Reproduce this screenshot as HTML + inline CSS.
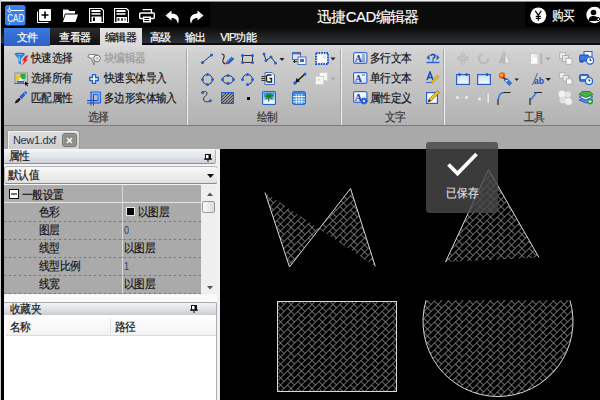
<!DOCTYPE html>
<html><head><meta charset="utf-8">
<style>
*{margin:0;padding:0;box-sizing:border-box}
html,body{width:600px;height:400px;overflow:hidden;background:#000;font-family:"Liberation Sans",sans-serif;font-size:12px}
.a{position:absolute}
#top{left:0;top:0;width:600px;height:27px;background:#000}
#tabs{left:0;top:27px;width:600px;height:18px;background:linear-gradient(#0a0a0a,#303437 16.5px,#0c0c0c 16.5px)}
.tab{position:absolute;top:28px;height:18px;color:#fff;font-size:11px;line-height:18px;text-align:center;letter-spacing:-0.6px;-webkit-text-stroke:0.2px currentColor}
#ribbon{left:0;top:45px;width:600px;height:81px;background:linear-gradient(#dadada,#d0d0d0 10%,#c2c2c2 55%,#b2b2b2)}
#rb2{left:0;top:125px;width:600px;height:1px;background:#7c7c7c}
#doctabs{left:0;top:126px;width:600px;height:23px;background:#a9a9a9}
#leftb{left:0;top:0;width:1px;height:400px;background:#cfcfcf}
#leftk{left:1px;top:45px;width:3px;height:355px;background:#000}
#panel{left:4px;top:148px;width:216px;height:252px;background:#f2f2f2}
.t{position:absolute;white-space:nowrap;color:#111;font-size:11px;line-height:14px;letter-spacing:-0.6px;transform:scaleY(1.12);transform-origin:0 55%;-webkit-text-stroke:0.15px currentColor}
.sep{position:absolute;top:49px;width:2px;height:76px;border-left:1px solid #a8a8a8;border-right:1px solid #efefef}
</style></head><body>
<div class="a" id="top"></div>
<div class="a" id="tabs"></div>
<div class="a" id="ribbon"></div>
<div class="a" id="rb2"></div>
<div class="a" id="doctabs"></div>

<!-- top bar -->
<div class="a" style="left:210px;top:1px;width:315px;height:26px;background:#0b0b0b"></div>
<div class="a" style="left:0;top:0;width:600px;height:2px;background:linear-gradient(#f0f0f0 1px,#8a8a8a 1px)"></div>
<svg class="a" style="left:5px;top:5px" width="21" height="21" viewBox="0 0 21 21">
 <rect x="0" y="0" width="20.5" height="20.5" rx="2.5" fill="#3d7fe8"/>
 <line x1="2.5" y1="5.5" x2="19" y2="5.5" stroke="#fff" stroke-width="1"/>
 <circle cx="4.5" cy="5.5" r="1.5" fill="#3d7fe8" stroke="#fff" stroke-width="0.9"/>
 <line x1="4.5" y1="1.5" x2="4.5" y2="4" stroke="#fff" stroke-width="0.8"/>
 <line x1="4.5" y1="18" x2="4.5" y2="19.5" stroke="#fff" stroke-width="0.8"/>
 <text x="10.8" y="17.3" fill="#fff" font-family="Liberation Sans" font-size="10" text-anchor="middle" textLength="17" lengthAdjust="spacingAndGlyphs">CAD</text>
</svg>
<svg class="a" style="left:36px;top:8px" width="16" height="16" viewBox="0 0 16 16">
 <path d="M1.5 3.5 V14.5 H12.5" fill="none" stroke="#fff" stroke-width="1"/>
 <rect x="3" y="1" width="12" height="12" rx="1" fill="#fff"/>
 <path d="M9 3.5 V10.5 M5.5 7 H12.5" stroke="#000" stroke-width="1.6"/>
</svg>
<svg class="a" style="left:62px;top:8px" width="17" height="15" viewBox="0 0 17 15">
 <path d="M1 1.5 H6 L7.5 3 H13 V5.5 H3 L1 11 Z" fill="#fff"/>
 <path d="M3.5 6.5 H16 L13.5 14 H1 Z" fill="#fff"/>
</svg>
<svg class="a" style="left:89px;top:8px" width="15" height="15" viewBox="0 0 15 15">
 <path d="M0.5 0.5 H12.5 L14.5 2.5 V14.5 H0.5 Z" fill="none" stroke="#fff" stroke-width="1.2"/>
 <rect x="2.5" y="2" width="9" height="2" fill="#fff"/><rect x="2.5" y="5.2" width="9" height="1.5" fill="#fff"/>
 <path d="M2.5 8.5 H12.5 V14 H2.5 Z" fill="#fff"/><rect x="4" y="9.5" width="2" height="3.5" fill="#000"/>
</svg>
<svg class="a" style="left:114px;top:8px" width="15" height="15" viewBox="0 0 15 15">
 <path d="M0.5 0.5 H12.5 L14.5 2.5 V14.5 H0.5 Z" fill="none" stroke="#fff" stroke-width="1.2"/>
 <rect x="2.5" y="2" width="9" height="2" fill="#fff"/><rect x="2.5" y="5.2" width="9" height="1.5" fill="#fff"/>
 <path d="M2.5 9 H13 V14 H2.5 Z" fill="#fff"/>
 <path d="M3.5 10.2 H5.5 V12.8 H3.5 Z M7 10.2 H9 V12.8 H7 Z M10.5 10.2 H11.5 V12.8 H10.5 Z" fill="#333"/>
</svg>
<svg class="a" style="left:139px;top:9px" width="16" height="14" viewBox="0 0 16 14">
 <path d="M3.5 0.5 H12.5 V4" fill="none" stroke="#fff" stroke-width="1.3"/>
 <rect x="0.7" y="4" width="14.6" height="5.5" rx="1" fill="none" stroke="#fff" stroke-width="1.4"/>
 <rect x="4" y="7.5" width="8" height="6" fill="#fff"/>
 <rect x="5.3" y="9" width="5" height="1" fill="#000"/><rect x="5.3" y="11" width="5" height="1" fill="#000"/>
</svg>
<svg class="a" style="left:165px;top:10px" width="16" height="15" viewBox="0 0 16 15">
 <path d="M0.5 5.5 L6.5 0.5 V3.5 C12 3.5 15.5 7 13 14 C12 9.5 10 8 6.5 8 V10.5 Z" fill="#fff"/>
</svg>
<svg class="a" style="left:188px;top:10px" width="16" height="15" viewBox="0 0 16 15">
 <path d="M15.5 5.5 L9.5 0.5 V3.5 C4 3.5 0.5 7 3 14 C4 9.5 6 8 9.5 8 V10.5 Z" fill="#fff"/>
</svg>
<div class="t" style="left:317px;top:9px;color:#fff;font-size:15px;line-height:16px;letter-spacing:-0.6px;transform:none">迅捷CAD编辑器</div>
<svg class="a" style="left:530px;top:7px" width="17" height="17" viewBox="0 0 17 17">
 <circle cx="8.3" cy="8.5" r="8" fill="#fff"/>
 <path d="M5.3 3.8 L8.3 8.2 L11.3 3.8 M8.3 8.2 V13.8 M5.8 9.3 H10.8 M5.8 11.3 H10.8" fill="none" stroke="#000" stroke-width="1.2"/>
</svg>
<div class="t" style="left:552px;top:9px;color:#fff;font-size:12px">购买</div>
<svg class="a" style="left:586px;top:6px" width="17" height="18" viewBox="0 0 17 18">
 <circle cx="8.5" cy="9" r="8.2" fill="#fff"/>
 <circle cx="7.5" cy="6.5" r="2.8" fill="#000"/>
 <path d="M2.5 15 C3 10.5 5 10 7.5 10 C10 10 11.5 11 12 13 L10 15 Z" fill="#000"/>
 <circle cx="12" cy="13" r="1.6" fill="none" stroke="#000" stroke-width="1"/>
</svg>
<!-- tabs -->
<div class="a" style="left:4px;top:28px;width:46px;height:18px;background:linear-gradient(#3a78e0,#2c62c8)"></div>
<div class="tab" style="left:4px;width:46px">文件</div>
<div class="a" style="left:50px;top:28px;width:50px;height:17px;background:linear-gradient(#2a2a2a,#111)"></div>
<div class="tab" style="left:50px;width:50px">查看器</div>
<div class="a" style="left:100px;top:28px;width:42px;height:18px;background:linear-gradient(#e2e2e2,#dadada)"></div>
<div class="tab" style="left:100px;width:41px;color:#111">编辑器</div>
<div class="tab" style="left:142px;width:36px">高级</div>
<div class="tab" style="left:178px;width:34px">输出</div>
<div class="tab" style="left:210px;width:56px;letter-spacing:-0.8px">VIP功能</div>

<!-- ribbon group 1 -->
<svg class="a" style="left:14px;top:52px" width="15" height="14" viewBox="0 0 15 14">
 <path d="M0.5 2 C0.5 0.2 11 0.2 11 2 L7 7 V12.5 L4.5 11.5 V7 Z" fill="#2a86e0"/>
 <ellipse cx="5.8" cy="2" rx="4.6" ry="1.1" fill="#1a5ab8"/>
 <ellipse cx="5.8" cy="2.2" rx="3.5" ry="0.5" fill="#8cc8ff"/>
 <path d="M5 4 L6 9" stroke="#bfe0ff" stroke-width="0.8"/>
 <path d="M12 3.5 L8 8.5 H10.5 L7.5 13.8 L14 7.5 H11.8 L14.5 3.5 Z" fill="#e81c24"/>
</svg>
<div class="t" style="left:31px;top:51px">快速选择</div>
<svg class="a" style="left:14px;top:72px" width="16" height="15" viewBox="0 0 16 15">
 <rect x="0.5" y="0.5" width="1.2" height="1" fill="#666"/><rect x="0.5" y="11" width="1.2" height="1" fill="#222"/><rect x="2.5" y="0.5" width="1.2" height="1" fill="#666"/><rect x="2.5" y="11" width="1.2" height="1" fill="#222"/><rect x="4.5" y="0.5" width="1.2" height="1" fill="#666"/><rect x="4.5" y="11" width="1.2" height="1" fill="#222"/><rect x="6.5" y="0.5" width="1.2" height="1" fill="#666"/><rect x="6.5" y="11" width="1.2" height="1" fill="#222"/><rect x="8.5" y="0.5" width="1.2" height="1" fill="#666"/><rect x="8.5" y="11" width="1.2" height="1" fill="#222"/><rect x="10.5" y="0.5" width="1.2" height="1" fill="#666"/><rect x="10.5" y="11" width="1.2" height="1" fill="#222"/><rect x="12.5" y="0.5" width="1.2" height="1" fill="#666"/><rect x="12.5" y="11" width="1.2" height="1" fill="#222"/><rect x="0.5" y="2.5" width="1" height="1.2" fill="#666"/><rect x="13" y="2.5" width="1" height="1.2" fill="#666"/><rect x="0.5" y="4.5" width="1" height="1.2" fill="#666"/><rect x="13" y="4.5" width="1" height="1.2" fill="#666"/><rect x="0.5" y="6.5" width="1" height="1.2" fill="#666"/><rect x="13" y="6.5" width="1" height="1.2" fill="#666"/><rect x="0.5" y="8.5" width="1" height="1.2" fill="#666"/><rect x="13" y="8.5" width="1" height="1.2" fill="#666"/><rect x="0.5" y="10.5" width="1" height="1.2" fill="#666"/><rect x="13" y="10.5" width="1" height="1.2" fill="#666"/>
 <circle cx="4.5" cy="6" r="2.8" fill="#f2c414"/>
 <path d="M6.5 2 H11.5 V6.5 C10 7.5 7.5 7 6.5 5.5 Z" fill="#28a838"/>
 <path d="M3.5 10 L6.5 5 L9.5 10 Z" fill="#e8f0ff"/>
 <rect x="3" y="9" width="7" height="1.6" fill="#1a5ad0"/>
 <path d="M11 9.5 L15 12 L13 12.3 L14 14.3 L13.2 14.6 L12.2 12.6 L11 14 Z" fill="#000"/>
</svg>
<div class="t" style="left:31px;top:71px">选择所有</div>
<svg class="a" style="left:14px;top:91px" width="14" height="13" viewBox="0 0 14 13">
 <path d="M0.5 12.5 L2 9.5 L5.5 6.5 L7 8 L4 11.5 Z" fill="#1a1a1a"/>
 <path d="M5 6 L10.5 0.8 C11.5 0 13.5 1 12.8 2.3 L7.5 8.5 Z" fill="#2a5ec8"/>
 <path d="M10 2 L12 3.5" stroke="#9ac4ff" stroke-width="1"/>
 <path d="M5 6 L7.5 8.5" stroke="#d8d8d8" stroke-width="0.8"/>
</svg>
<div class="t" style="left:31px;top:91px">匹配属性</div>
<svg class="a" style="left:87px;top:52px" width="14" height="14" viewBox="0 0 14 14">
 <path d="M2 2.5 H9.5 L7.5 6 L7 13 L4.5 6.5 L0.8 5 Z" fill="#d8d8d8" stroke="#7a7a7a" stroke-width="0.9"/>
 <rect x="2.5" y="3" width="4" height="2" fill="#fafafa"/>
 <circle cx="10" cy="6.5" r="3.3" fill="#f4f4f4" stroke="#707070" stroke-width="1"/>
 <circle cx="10" cy="6.5" r="1.4" fill="#bdbdbd"/>
</svg>
<div class="t" style="left:104px;top:51px;color:#9a9a9a">块编辑器</div>
<svg class="a" style="left:89px;top:74px" width="10" height="10" viewBox="0 0 10 10">
 <path d="M3.5 0.7 H6.5 V3.5 H9.3 V6.5 H6.5 V9.3 H3.5 V6.5 H0.7 V3.5 H3.5 Z" fill="#fff" stroke="#1f5fc8" stroke-width="1.3"/>
</svg>
<div class="t" style="left:104px;top:71px">快速实体导入</div>
<svg class="a" style="left:87px;top:91px" width="14" height="15" viewBox="0 0 14 15">
 <path d="M4 1 H13 V12 H4 Z M6.5 3.5 V9.5 H11 V3.5 Z" fill="#8ab4f8" fill-rule="evenodd"/>
 <path d="M3.5 1 H13.5 V12 M6.5 3.5 H11 V9.5" fill="none" stroke="#2060e0" stroke-width="1"/>
 <path d="M0 9.5 H11 M0 12 H13.5 M4 1 V14.5 M6.5 3.5 V14.5" fill="none" stroke="#1848c8" stroke-width="1"/>
</svg>
<div class="t" style="left:104px;top:91px">多边形实体输入</div>
<div class="t" style="left:88px;top:110px;color:#333">选择</div>
<div class="sep" style="left:186px"></div>
<!-- group 2 -->
<svg class="a" style="left:200px;top:53px" width="14" height="12" viewBox="0 0 14 12">
 <line x1="2.5" y1="9.5" x2="11.5" y2="2" stroke="#333" stroke-width="1"/>
 <circle cx="2.5" cy="9.5" r="1.6" fill="#1f5fd8"/><circle cx="11.5" cy="2" r="1.6" fill="#1f5fd8"/>
</svg>
<svg class="a" style="left:220px;top:53px" width="15" height="12" viewBox="0 0 15 12">
 <path d="M1.5 1 C4 1 5 3 3.5 5.5 C2 8 3 10.5 5.5 11" fill="none" stroke="#222" stroke-width="1.1"/>
 <path d="M6 9 L11.5 3.5 L14 6 L8.5 11 Z" fill="#2a82e8"/>
 <path d="M8.5 11 L14 6 L13 5 L7.5 10 Z" fill="#1a4ab8"/>
 <path d="M6 9 L8.5 11 L5.2 11.3 Z" fill="#e02020"/>
</svg>
<svg class="a" style="left:241px;top:54px" width="13" height="10" viewBox="0 0 13 10">
 <rect x="1.5" y="1.5" width="10" height="7" fill="none" stroke="#333" stroke-width="1"/>
 <circle cx="1.5" cy="1.5" r="1.5" fill="#1f5fd8"/><circle cx="11.5" cy="1.5" r="1.5" fill="#1f5fd8"/>
 <circle cx="1.5" cy="8.5" r="1.5" fill="#1f5fd8"/><circle cx="11.5" cy="8.5" r="1.5" fill="#1f5fd8"/>
</svg>
<svg class="a" style="left:262px;top:52px" width="24" height="13" viewBox="0 0 24 13">
 <path d="M2 2 L4 8.5 L9 5 L13.5 11" fill="none" stroke="#333" stroke-width="1"/>
 <circle cx="2" cy="2" r="1.5" fill="#1f5fd8"/><circle cx="4" cy="8.5" r="1.5" fill="#1f5fd8"/>
 <circle cx="9" cy="5" r="1.5" fill="#1f5fd8"/><circle cx="13.5" cy="11" r="1.5" fill="#1f5fd8"/>
 <path d="M17.5 6 H22.5 L20 9 Z" fill="#222"/>
</svg>
<svg class="a" style="left:292px;top:52px" width="15" height="13" viewBox="0 0 15 13">
 <rect x="0.5" y="0.5" width="8" height="7" fill="#dfe8f8" stroke="#4a74c0" stroke-width="1"/>
 <rect x="0.5" y="0.5" width="8" height="1.8" fill="#3a6ad0"/><rect x="6" y="0.5" width="2.5" height="1.8" fill="#e03030"/>
 <rect x="6" y="5" width="8" height="7.5" fill="#eef3fc" stroke="#4a74c0" stroke-width="1"/>
 <rect x="8" y="7" width="4" height="3" fill="#3a6ad0"/>
 <path d="M1.5 9.5 H5 M3 8 L1.5 9.5 L3 11" fill="none" stroke="#222" stroke-width="1"/>
</svg>
<svg class="a" style="left:315px;top:52px" width="22" height="13" viewBox="0 0 22 13">
 <rect x="1" y="1" width="12" height="11" fill="#eaf0fc" stroke="#1e50d0" stroke-width="2" stroke-dasharray="1.6 1"/>
 <path d="M3 3.5 H8 L11 6.5 V10 H3 Z" fill="#fff"/>
 <path d="M8 3.5 V6.5 H11" fill="#c8d8f4"/>
 <path d="M15.5 5.5 H20.5 L18 8.5 Z" fill="#222"/>
</svg>
<svg class="a" style="left:201px;top:73px" width="13" height="13" viewBox="0 0 13 13">
 <circle cx="6.5" cy="6.5" r="5" fill="none" stroke="#333" stroke-width="1"/>
 <circle cx="6.5" cy="1.5" r="1.5" fill="#1f5fd8"/><circle cx="1.5" cy="6.5" r="1.5" fill="#1f5fd8"/>
 <circle cx="11.5" cy="6.5" r="1.5" fill="#1f5fd8"/><circle cx="6.5" cy="11.5" r="1.5" fill="#1f5fd8"/>
</svg>
<svg class="a" style="left:221px;top:74px" width="14" height="11" viewBox="0 0 14 11">
 <ellipse cx="7" cy="5.5" rx="5.5" ry="4" fill="none" stroke="#333" stroke-width="1"/>
 <circle cx="7" cy="1.5" r="1.5" fill="#1f5fd8"/><circle cx="1.5" cy="5.5" r="1.5" fill="#1f5fd8"/>
 <circle cx="12.5" cy="5.5" r="1.5" fill="#1f5fd8"/><circle cx="7" cy="9.5" r="1.5" fill="#1f5fd8"/>
</svg>
<svg class="a" style="left:241px;top:73px" width="13" height="13" viewBox="0 0 13 13">
 <path d="M1.5 6.5 A5 5 0 1 1 6.5 11.5" fill="none" stroke="#333" stroke-width="1"/>
 <circle cx="6.5" cy="1.5" r="1.5" fill="#1f5fd8"/><circle cx="1.5" cy="6.5" r="1.5" fill="#1f5fd8"/>
 <circle cx="11.5" cy="6.5" r="1.5" fill="#1f5fd8"/><circle cx="6.5" cy="11.5" r="1.5" fill="#1f5fd8"/>
</svg>
<svg class="a" style="left:261px;top:72px" width="14" height="13" viewBox="0 0 14 13">
 <path d="M4 0.5 H11 L13.5 3 V12.5 H4 Z" fill="#eef2fa" stroke="#3a6ac8" stroke-width="1"/>
 <path d="M10.5 3 H7 C5.8 3 5.5 4 5.5 5 V8.5 C5.5 9.5 6 10 7 10 H10.5 V6.5 H8.5" fill="none" stroke="#222" stroke-width="1.3"/>
 <path d="M0.5 4.5 H4.5 M0 6.5 H4.5 M0.5 8.5 H4.5" stroke="#333" stroke-width="1"/>
</svg>
<svg class="a" style="left:293px;top:72px" width="14" height="13" viewBox="0 0 14 13">
 <line x1="2" y1="11" x2="12" y2="2" stroke="#1a1a1a" stroke-width="1.5"/>
 <path d="M2.5 10.5 L3.5 6 L7 9.5 Z" fill="#111"/>
 <circle cx="12" cy="2" r="1.5" fill="#1f5fd8"/><circle cx="2" cy="11" r="1.7" fill="#1f5fd8"/>
</svg>
<svg class="a" style="left:315px;top:72px" width="22" height="13" viewBox="0 0 22 13">
 <rect x="4.5" y="0.5" width="8" height="8" fill="#f6f6f6" stroke="#d0d0d0" stroke-width="1"/>
 <rect x="0.5" y="4.5" width="8" height="8" fill="#fafafa" stroke="#cfcfcf" stroke-width="1"/>
 <path d="M3 7 L7 10.5 M3 7 V9.5 M3 7 H5.5" stroke="#d4d4d4" stroke-width="0.9" fill="none"/>
 <path d="M15.5 5.5 H20.5 L18 8.5 Z" fill="#a8a8a8"/>
</svg>
<svg class="a" style="left:201px;top:91px" width="11" height="12" viewBox="0 0 11 12">
 <path d="M1.5 1.5 C3 0 6 0 6 2.5 C6 5 2.5 5 2.5 8 C2.5 11 6 11.5 9.5 10" fill="none" stroke="#333" stroke-width="1"/>
 <circle cx="1.6" cy="1.6" r="1.5" fill="#1f5fd8"/><circle cx="9.4" cy="9.8" r="1.5" fill="#1f5fd8"/>
</svg>
<svg class="a" style="left:221px;top:92px" width="13" height="12" viewBox="0 0 13 12">
 <rect x="0.6" y="0.6" width="11.8" height="10.8" fill="#9a9a9a" stroke="#1f5fd8" stroke-width="1.2"/>
 <path d="M1 8 L8 1 M1 11 L11 1 M4 11 L12 3 M7 11 L12 6 M10 11 L12 9 M1 5 L5 1" stroke="#333" stroke-width="0.9"/>
</svg>
<div class="a" style="left:247px;top:97px;width:3px;height:3px;background:#000"></div>
<svg class="a" style="left:262px;top:91px" width="14" height="14" viewBox="0 0 14 14">
 <defs><linearGradient id="sky" x1="0" y1="0" x2="0" y2="1"><stop offset="0" stop-color="#1a90e0"/><stop offset="1" stop-color="#a8e0ff"/></linearGradient></defs>
 <rect x="0.6" y="0.6" width="12.8" height="12.8" rx="1" fill="#fff" stroke="#2a5ec8" stroke-width="1.2"/>
 <rect x="1.5" y="1.5" width="11" height="8" fill="url(#sky)"/>
 <path d="M6.5 12 L7 5.5" stroke="#3a4a20" stroke-width="1.1"/>
 <path d="M7 5.5 L2.5 5 M7 5.5 L11.5 4.5 M7 5.5 L3.5 8 M7 5.5 L10.5 8 M7 5.5 L5 2.5 M7 5.5 L9 2.5" stroke="#107a30" stroke-width="1.5"/>
 <rect x="1.5" y="10.5" width="11" height="2" fill="#e8f4ff"/>
</svg>
<svg class="a" style="left:292px;top:91px" width="14" height="14" viewBox="0 0 14 14">
 <rect x="0.6" y="0.6" width="12.8" height="12.8" rx="1.5" fill="#3a8ae8" stroke="#2a62c8" stroke-width="1"/>
 <path d="M4.2 3 V13 M7 3 V13 M9.8 3 V13 M1 5.5 H13 M1 8.2 H13 M1 10.8 H13" stroke="#fff" stroke-width="0.9"/>
</svg>
<div class="t" style="left:257px;top:110px;color:#333">绘制</div>
<div class="sep" style="left:340px"></div>
<!-- group 3 -->
<svg class="a" style="left:353px;top:52px" width="15" height="12" viewBox="0 0 15 12">
 <defs><linearGradient id="ag" x1="0" y1="0" x2="0" y2="1"><stop offset="0" stop-color="#ffffff"/><stop offset="1" stop-color="#d0e0fa"/></linearGradient></defs>
 <rect x="0.6" y="0.6" width="13.3" height="10.8" rx="1.5" fill="url(#ag)" stroke="#3a6ad8" stroke-width="1.2"/>
 <text x="1.8" y="9.8" font-family="Liberation Serif" font-weight="bold" font-size="10" fill="#1a3ab0">A</text>
 <path d="M8.8 3 H12 M8.8 5 H12 M8.8 7 H12 M8.8 9 H12" stroke="#2a3a7a" stroke-width="0.8"/>
</svg>
<div class="t" style="left:370px;top:51px">多行文本</div>
<svg class="a" style="left:353px;top:72px" width="15" height="12" viewBox="0 0 15 12">
 <rect x="0.6" y="0.6" width="13.3" height="10.8" rx="1.5" fill="url(#ag)" stroke="#3a6ad8" stroke-width="1.2"/>
 <text x="1.8" y="9.8" font-family="Liberation Serif" font-weight="bold" font-size="10" fill="#1a3ab0">A</text>
 <path d="M8.8 3 H12" stroke="#2a3a7a" stroke-width="0.8"/>
</svg>
<div class="t" style="left:370px;top:71px">单行文本</div>
<svg class="a" style="left:353px;top:91px" width="15" height="14" viewBox="0 0 15 14">
 <rect x="0.6" y="0.6" width="13.3" height="10.8" rx="1.5" fill="url(#ag)" stroke="#3a6ad8" stroke-width="1.2"/>
 <text x="1.8" y="9.8" font-family="Liberation Serif" font-weight="bold" font-size="10" fill="#1a3ab0">A</text>
 <circle cx="11" cy="10" r="2.8" fill="#2a6ae0" stroke="#1a4ab8" stroke-width="1.4" stroke-dasharray="1 0.8"/>
 <circle cx="11" cy="10" r="1" fill="#fff"/>
</svg>
<div class="t" style="left:370px;top:91px">属性定义</div>
<svg class="a" style="left:426px;top:53px" width="14" height="11" viewBox="0 0 14 11">
 <path d="M0.5 4.5 L3.5 1.5 V7.5 Z M13.5 4.5 L10.5 1.5 V7.5 Z" fill="#1f5fd8"/>
 <path d="M0.5 9.5 H13.5" stroke="#1f5fd8" stroke-width="1.4"/>
 <path d="M4.8 2.8 C5 1 9 1 9 3 C9 4.5 7 4.5 7 6.5" fill="none" stroke="#1a3a98" stroke-width="1.4"/>
 <rect x="6.3" y="7.3" width="1.4" height="1.2" fill="#1a3a98"/>
</svg>
<svg class="a" style="left:426px;top:71px" width="14" height="13" viewBox="0 0 14 13">
 <path d="M1 9 L4 1 L7 9 M2 6.5 H6" fill="none" stroke="#1a4ab8" stroke-width="1.5"/>
 <path d="M0 11.5 H7" stroke="#3a6ad0" stroke-width="1"/>
 <path d="M5 11 L11.5 4 L13 5.5 L6.5 12.5 Z" fill="#f0c020" stroke="#a07010" stroke-width="0.5"/>
</svg>
<svg class="a" style="left:426px;top:90px" width="14" height="14" viewBox="0 0 14 14">
 <rect x="0.6" y="2.6" width="10.8" height="10.8" fill="#fff" stroke="#2a5ec8" stroke-width="1.2"/>
 <path d="M2 12 L3 9 L11.5 0.5 L13.5 2.5 L5 11 Z" fill="#f0c020" stroke="#806010" stroke-width="0.6"/>
 <path d="M2 12 L3 9 L5 11 Z" fill="#222"/>
</svg>
<div class="t" style="left:385px;top:110px;color:#333">文字</div>
<div class="sep" style="left:443px"></div>
<!-- group 4 -->
<svg class="a" style="left:456px;top:52px" width="14" height="13" viewBox="0 0 14 13">
 <path d="M7 0.5 L9 3 H7.8 V5.7 H10.5 V4.5 L13 6.5 L10.5 8.5 V7.3 H7.8 V10 H9 L7 12.5 L5 10 H6.2 V7.3 H3.5 V8.5 L1 6.5 L3.5 4.5 V5.7 H6.2 V3 H5 Z" fill="#d4d4d4" stroke="#a8a8a8" stroke-width="0.7"/>
</svg>
<svg class="a" style="left:477px;top:52px" width="13" height="13" viewBox="0 0 13 13">
 <path d="M5 2.5 A4.5 4.5 0 1 0 11 6" fill="none" stroke="#b8b8b8" stroke-width="2"/>
 <path d="M3 0 L7.5 2.5 L4 5.5 Z" fill="#c8c8c8"/>
</svg>
<svg class="a" style="left:497px;top:51px" width="14" height="14" viewBox="0 0 14 14">
 <path d="M7 0 V14" stroke="#a8a8a8" stroke-width="1"/>
 <path d="M6 2 V12 H1 Z" fill="#b8b8b8"/><path d="M8 2 V12 H13 Z" fill="#f0f0f0" stroke="#b0b0b0" stroke-width="0.7"/>
</svg>
<svg class="a" style="left:530px;top:53px" width="21" height="12" viewBox="0 0 21 12">
 <rect x="0.5" y="0.5" width="12" height="11" fill="url(#gg)" stroke="#c8c8c8" stroke-width="1"/>
 <defs><linearGradient id="gg"><stop offset="0" stop-color="#fafafa"/><stop offset="0.5" stop-color="#e8e8e8"/><stop offset="1" stop-color="#aaaaaa"/></linearGradient></defs>
 <rect x="3" y="5" width="4" height="5" fill="#fff"/>
 <path d="M15.5 4.5 H20.5 L18 7.5 Z" fill="#a0a0a0"/>
</svg>
<svg class="a" style="left:559px;top:52px" width="14" height="13" viewBox="0 0 14 13">
 <rect x="0.7" y="0.7" width="6" height="6" fill="#f4f4f4" stroke="#b0b0b0" stroke-width="1"/>
 <rect x="3.5" y="3.5" width="6" height="6" fill="#e8e8e8" stroke="#b0b0b0" stroke-width="1"/>
 <rect x="7" y="6.3" width="6" height="6" fill="#fafafa" stroke="#b0b0b0" stroke-width="1"/>
</svg>
<svg class="a" style="left:579px;top:51px" width="15" height="14" viewBox="0 0 15 14">
 <rect x="5" y="0.5" width="8" height="6" fill="#eef3ff" stroke="#2a5ec8" stroke-width="1"/>
 <rect x="0.7" y="4" width="9" height="6" rx="1" fill="#3a7ae0" stroke="#1a4ab8" stroke-width="1"/>
 <circle cx="11" cy="9.5" r="3.6" fill="#fff" stroke="#1f5fd8" stroke-width="1.2"/>
 <path d="M11 7.5 V9.5 H12.5" stroke="#1f5fd8" stroke-width="1"/>
 <rect x="0.5" y="10" width="4" height="1.5" fill="#1a4ab8"/>
</svg>
<svg class="a" style="left:456px;top:73px" width="14" height="12" viewBox="0 0 14 12">
 <rect x="0.6" y="1.6" width="12.8" height="9.8" fill="url(#bg1)" stroke="#2a5ec8" stroke-width="1.2"/>
 <defs><linearGradient id="bg1" x1="0" y1="0" x2="0" y2="1"><stop offset="0" stop-color="#c8dcff"/><stop offset="1" stop-color="#f8fbff"/></linearGradient></defs>
 <circle cx="3.5" cy="1.6" r="1.3" fill="#1a4ab8"/><circle cx="10.5" cy="1.6" r="1.3" fill="#1a4ab8"/>
</svg>
<svg class="a" style="left:477px;top:73px" width="14" height="12" viewBox="0 0 14 12">
 <rect x="0.6" y="1.6" width="12.8" height="9.8" fill="url(#bg1)" stroke="#2a5ec8" stroke-width="1.2"/>
 <circle cx="10" cy="1.6" r="1.3" fill="#1a4ab8"/>
</svg>
<svg class="a" style="left:498px;top:72px" width="21" height="14" viewBox="0 0 21 14">
 <circle cx="4" cy="3.5" r="3.2" fill="#f05a20"/><circle cx="3.5" cy="3" r="1.5" fill="#ffb030"/>
 <path d="M4.5 6 L6 5 L8 7 L7 8 Z" fill="#222"/>
 <path d="M6 8 L9 6.5 L13.5 11 L11.5 13.5 Z" fill="#2a7ae8" stroke="#1a4ab8" stroke-width="0.7"/>
 <rect x="7.5" y="8" width="2" height="1.5" fill="#fff"/>
 <path d="M16.5 6.5 H21 L18.7 9 Z" fill="#222"/>
</svg>
<svg class="a" style="left:531px;top:72px" width="21" height="14" viewBox="0 0 21 14">
 <path d="M1.5 13 L6.5 1" stroke="#666" stroke-width="1"/>
 <text x="3" y="12" font-family="Liberation Sans" font-weight="bold" font-size="9" fill="#1a4ad0" textLength="10" lengthAdjust="spacingAndGlyphs">ab</text>
 <path d="M14.5 6 H20 L17.2 9 Z" fill="#222"/>
</svg>
<svg class="a" style="left:559px;top:72px" width="14" height="13" viewBox="0 0 14 13">
 <rect x="0.7" y="0.7" width="5.5" height="5.5" fill="#f8f8f8" stroke="#b0b0b0" stroke-width="1"/>
 <rect x="4" y="3.5" width="5.5" height="5.5" fill="#eaeaea" stroke="#b0b0b0" stroke-width="1"/>
 <rect x="7.5" y="6.8" width="5.5" height="5.5" fill="#fafafa" stroke="#b0b0b0" stroke-width="1"/>
</svg>
<svg class="a" style="left:579px;top:74px" width="14" height="11" viewBox="0 0 14 11">
 <rect x="0.7" y="0.7" width="9" height="6.5" rx="1" fill="#3a7ae0" stroke="#1a4ab8" stroke-width="1"/>
 <rect x="2" y="2" width="6" height="3" fill="#dfe9ff"/>
 <circle cx="10" cy="7" r="3.5" fill="#fff" stroke="#1f5fd8" stroke-width="1.2"/>
 <path d="M10 5 V7 H11.5" stroke="#1f5fd8" stroke-width="1"/>
</svg>
<svg class="a" style="left:456px;top:95px" width="14" height="5" viewBox="0 0 14 5">
 <rect x="0" y="1" width="3" height="3" fill="#f4f4f4" stroke="#c0c0c0" stroke-width="0.6"/>
 <path d="M4 2.5 H8" stroke="#c8c8c8" stroke-width="1" />
 <rect x="9" y="1" width="3" height="3" fill="#f4f4f4" stroke="#c0c0c0" stroke-width="0.6"/>
</svg>
<svg class="a" style="left:477px;top:92px" width="14" height="12" viewBox="0 0 14 12">
 <path d="M0 7 H9" stroke="#c0c0c0" stroke-width="1"/>
 <rect x="1" y="5.5" width="3" height="3" fill="#f4f4f4" stroke="#c0c0c0" stroke-width="0.6"/>
 <rect x="10" y="0.5" width="2.5" height="11" fill="#e8e8e8" stroke="#b8b8b8" stroke-width="0.8"/>
</svg>
<svg class="a" style="left:497px;top:91px" width="14" height="14" viewBox="0 0 14 14">
 <path d="M1 14 V8 M6 1.5 H13.5" fill="none" stroke="#222" stroke-width="1.2"/>
 <path d="M1.5 9 C1.5 5 3 2 6.5 1.8" fill="none" stroke="#2a7ae8" stroke-width="1.4"/>
</svg>
<svg class="a" style="left:529px;top:91px" width="13" height="14" viewBox="0 0 13 14">
 <path d="M1 14 V7 M5 1.5 H13" fill="none" stroke="#222" stroke-width="1.2"/>
 <path d="M1.5 9 L7.5 1.5" stroke="#2a7ae8" stroke-width="1.4"/>
</svg>
<svg class="a" style="left:558px;top:90px" width="15" height="16" viewBox="0 0 15 16">
 <circle cx="4" cy="4" r="3.5" fill="#f2f2f2"/><circle cx="10" cy="4.5" r="3" fill="#e6e6e6"/>
 <circle cx="5" cy="10" r="3.5" fill="#e0e0e0"/><circle cx="10.5" cy="11.5" r="3.5" fill="#f0f0f0"/>
</svg>
<svg class="a" style="left:578px;top:91px" width="16" height="14" viewBox="0 0 16 14">
 <path d="M1 9 L8 12 L15 9 L8 6 Z" fill="#5a8ae0" stroke="#1a4ab8" stroke-width="0.8"/>
 <path d="M1 6 L8 9 L15 6 L8 3 Z" fill="#dfe8f8" stroke="#1a4ab8" stroke-width="0.8"/>
 <path d="M1 3.5 L8 6.5 L15 3.5 L12 0.5 H4 Z" fill="#48b048" stroke="#207020" stroke-width="0.8"/>
 <circle cx="12" cy="10.5" r="3" fill="#20a040"/>
 <path d="M10.5 10.5 H13.5 M12 9 V12" stroke="#fff" stroke-width="1"/>
</svg>
<div class="t" style="left:524px;top:110px;color:#333">工具</div>

<!-- doc tabs -->
<div class="a" style="left:7px;top:130px;width:73px;height:19px;background:linear-gradient(#dedede,#cfcfcf);border:1px solid #9a9a9a;border-bottom:none;border-radius:2px 3px 0 0;box-shadow:inset 1px 1px 0 #f0f0f0"></div>
<div class="a" style="left:13px;top:133px;color:#2a3548;font-size:11px;letter-spacing:-0.35px;line-height:14px;font-family:'Liberation Sans',sans-serif;white-space:nowrap">New1.dxf</div>
<div class="a" style="left:62px;top:133px;width:15px;height:14px;background:#8c8c8c;border:1px solid #747474;border-radius:3px;box-shadow:inset 0 0 0 1px #9c9c9c"></div>
<svg class="a" style="left:65px;top:136px" width="9" height="9" viewBox="0 0 9 9"><path d="M2 2 L7 7 M7 2 L2 7" stroke="#fffbe0" stroke-width="1.6"/></svg>
<!-- panel -->
<div class="a" style="left:4px;top:149px;width:216px;height:251px;background:#f4f4f4"></div>
<div class="a" style="left:4px;top:149px;width:212px;height:15px;background:linear-gradient(#f0f2f5,#e2e5e9 50%,#ced2d8);border:1px solid #b0b0b0;border-top-color:#fafafa;border-left:none;border-bottom-color:#8e8e8e;border-radius:0 2px 2px 0"></div>
<div class="t" style="left:9px;top:150px;line-height:13px;color:#111">属性</div>
<svg class="a" style="left:204px;top:154px" width="8" height="8" viewBox="0 0 8 8"><rect x="1.5" y="0.5" width="5" height="4.5" fill="#fff" stroke="#111" stroke-width="1"/><rect x="4.5" y="1" width="1.5" height="4" fill="#111"/><rect x="0" y="4.5" width="8" height="1.2" fill="#111"/><rect x="3.5" y="5.5" width="1" height="2.5" fill="#111"/></svg>
<div class="a" style="left:4px;top:166px;width:214px;height:18px;background:linear-gradient(#f8f8f8,#ececec 60%,#e0e0e0);border:1px solid #b4b4b4;border-bottom-color:#8a8a8a;border-radius:3px"></div>
<div class="t" style="left:8px;top:168px;color:#111">默认值</div>
<svg class="a" style="left:207px;top:174px" width="7" height="4" viewBox="0 0 7 4"><path d="M0 0 H7 L3.5 4 Z" fill="#111"/></svg>
<!-- grid -->
<div class="a" style="left:4px;top:185px;width:197px;height:109px;background:#aaaaaa"></div>
<div class="a" style="left:4px;top:185px;width:197px;height:17px;background:#acacac"></div>
<div class="a" style="left:4px;top:202px;width:197px;height:1px;background:#e4e4e4"></div>
<svg class="a" style="left:9px;top:189px" width="10" height="10" viewBox="0 0 10 10"><rect x="0.5" y="0.5" width="9" height="9" fill="#fff" stroke="#111"/><path d="M2 5 H8" stroke="#111" stroke-width="1.2"/></svg>
<div class="t" style="left:22px;top:188px;color:#111">一般设置</div>
<div class="a" style="left:122px;top:185px;width:1px;height:109px;background:#d8d8d8"></div>
<div class="a" style="left:4px;top:221px;width:197px;height:1px;background:repeating-linear-gradient(90deg,#767676 0 2px,#a4a4a4 2px 5px)"></div>
<div class="a" style="left:4px;top:239px;width:197px;height:1px;background:repeating-linear-gradient(90deg,#767676 0 2px,#a4a4a4 2px 5px)"></div>
<div class="a" style="left:4px;top:257px;width:197px;height:1px;background:repeating-linear-gradient(90deg,#767676 0 2px,#a4a4a4 2px 5px)"></div>
<div class="a" style="left:4px;top:275px;width:197px;height:1px;background:repeating-linear-gradient(90deg,#767676 0 2px,#a4a4a4 2px 5px)"></div>
<div class="a" style="left:4px;top:293px;width:197px;height:1px;background:repeating-linear-gradient(90deg,#767676 0 2px,#a4a4a4 2px 5px)"></div>
<div class="t" style="left:39px;top:205px;color:#111">色彩</div>
<div class="t" style="left:39px;top:223px;color:#111">图层</div>
<div class="t" style="left:39px;top:241px;color:#111">线型</div>
<div class="t" style="left:39px;top:259px;color:#111">线型比例</div>
<div class="t" style="left:39px;top:277px;color:#111">线宽</div>
<div class="a" style="left:126px;top:207px;width:9px;height:9px;background:#000;border:1px solid #e8e8e8"></div>
<div class="t" style="left:138px;top:205px;color:#111">以图层</div>
<div class="t" style="left:124px;top:224px;color:#2a3a7a;font-size:9px;-webkit-text-stroke:0">0</div>
<div class="t" style="left:124px;top:241px;color:#111">以图层</div>
<div class="t" style="left:124px;top:260px;color:#2a3a7a;font-size:9px;-webkit-text-stroke:0">1</div>
<div class="t" style="left:124px;top:277px;color:#111">以图层</div>
<!-- scrollbar -->
<div class="a" style="left:201px;top:185px;width:16px;height:109px;background:#efefef"></div>
<svg class="a" style="left:207px;top:192px" width="6" height="4" viewBox="0 0 6 4"><path d="M0 4 H6 L3 0.5 Z" fill="#555"/></svg>
<div class="a" style="left:202px;top:201px;width:13px;height:12px;background:linear-gradient(90deg,#fafafa,#dcdcdc);border:1px solid #9a9a9a;border-radius:2px"></div>
<svg class="a" style="left:207px;top:286px" width="6" height="4" viewBox="0 0 6 4"><path d="M0 0 H6 L3 3.5 Z" fill="#555"/></svg>
<!-- favorites -->
<div class="a" style="left:4px;top:294px;width:214px;height:8px;background:#fafafa"></div>
<div class="a" style="left:4px;top:302px;width:213px;height:14px;background:linear-gradient(#f2f3f5,#e0e3e6 50%,#c8ccd0);border:1px solid #a8a8a8;border-left:none;border-bottom-color:#8e8e8e;border-radius:0 2px 2px 0"></div>
<div class="t" style="left:10px;top:303px;line-height:13px;color:#111">收藏夹</div>
<svg class="a" style="left:190px;top:305px" width="8" height="8" viewBox="0 0 8 8"><rect x="1.5" y="0.5" width="5" height="4.5" fill="#fff" stroke="#111" stroke-width="1"/><rect x="4.5" y="1" width="1.5" height="4" fill="#111"/><rect x="0" y="4.5" width="8" height="1.2" fill="#111"/><rect x="3.5" y="5.5" width="1" height="2.5" fill="#111"/></svg>
<div class="a" style="left:4px;top:315px;width:213px;height:85px;background:#fff;border-right:1px solid #b0b0b0"></div>
<div class="a" style="left:6px;top:316px;width:210px;height:20px;background:linear-gradient(#fff,#f2f2f2);border-bottom:1px solid #dcdcdc"></div>
<div class="a" style="left:110px;top:318px;width:1px;height:17px;background:#e4e4e4"></div>
<div class="t" style="left:10px;top:320px;color:#111">名称</div>
<div class="t" style="left:115px;top:320px;color:#111">路径</div>
<div class="a" style="left:217px;top:149px;width:3px;height:251px;background:#f0f0f0"></div>
<!-- canvas -->
<svg class="a" style="left:220px;top:149px" width="380" height="251" viewBox="220 149 380 251">
 <defs>
  <clipPath id="cp"><path d="M265 192.5 L289.5 267 L350.5 188.5 L375.3 266.4 Z M445.5 262 L488.5 169.5 L539 257.5 Z M277.5 301.5 H396.5 V391.5 H277.5 Z M426 300.5 A75 75 0 1 0 570 300.5 Z"/></clipPath>
 </defs>
 <g clip-path="url(#cp)" fill="none" stroke="#8e8e8e" stroke-width="1"><path d="M-49.5 400.0L201.5 149.0M-42.5 400.0L208.5 149.0M-35.5 400.0L215.5 149.0M-28.5 400.0L222.5 149.0M-21.5 400.0L229.5 149.0M-14.5 400.0L236.5 149.0M-7.5 400.0L243.5 149.0M-0.5 400.0L250.5 149.0M6.5 400.0L257.5 149.0M13.5 400.0L264.5 149.0M20.5 400.0L271.5 149.0M27.5 400.0L278.5 149.0M34.5 400.0L285.5 149.0M41.5 400.0L292.5 149.0M48.5 400.0L299.5 149.0M55.5 400.0L306.5 149.0M62.5 400.0L313.5 149.0M69.5 400.0L320.5 149.0M76.5 400.0L327.5 149.0M83.5 400.0L334.5 149.0M90.5 400.0L341.5 149.0M97.5 400.0L348.5 149.0M104.5 400.0L355.5 149.0M111.5 400.0L362.5 149.0M118.5 400.0L369.5 149.0M125.5 400.0L376.5 149.0M132.5 400.0L383.5 149.0M139.5 400.0L390.5 149.0M146.5 400.0L397.5 149.0M153.5 400.0L404.5 149.0M160.5 400.0L411.5 149.0M167.5 400.0L418.5 149.0M174.5 400.0L425.5 149.0M181.5 400.0L432.5 149.0M188.5 400.0L439.5 149.0M195.5 400.0L446.5 149.0M202.5 400.0L453.5 149.0M209.5 400.0L460.5 149.0M216.5 400.0L467.5 149.0M223.5 400.0L474.5 149.0M230.5 400.0L481.5 149.0M237.5 400.0L488.5 149.0M244.5 400.0L495.5 149.0M251.5 400.0L502.5 149.0M258.5 400.0L509.5 149.0M265.5 400.0L516.5 149.0M272.5 400.0L523.5 149.0M279.5 400.0L530.5 149.0M286.5 400.0L537.5 149.0M293.5 400.0L544.5 149.0M300.5 400.0L551.5 149.0M307.5 400.0L558.5 149.0M314.5 400.0L565.5 149.0M321.5 400.0L572.5 149.0M328.5 400.0L579.5 149.0M335.5 400.0L586.5 149.0M342.5 400.0L593.5 149.0M349.5 400.0L600.5 149.0M356.5 400.0L607.5 149.0M363.5 400.0L614.5 149.0M370.5 400.0L621.5 149.0M377.5 400.0L628.5 149.0M384.5 400.0L635.5 149.0M391.5 400.0L642.5 149.0M398.5 400.0L649.5 149.0M405.5 400.0L656.5 149.0M412.5 400.0L663.5 149.0M419.5 400.0L670.5 149.0M426.5 400.0L677.5 149.0M433.5 400.0L684.5 149.0M440.5 400.0L691.5 149.0M447.5 400.0L698.5 149.0M454.5 400.0L705.5 149.0M461.5 400.0L712.5 149.0M468.5 400.0L719.5 149.0M475.5 400.0L726.5 149.0M482.5 400.0L733.5 149.0M489.5 400.0L740.5 149.0M496.5 400.0L747.5 149.0M503.5 400.0L754.5 149.0M510.5 400.0L761.5 149.0M517.5 400.0L768.5 149.0M524.5 400.0L775.5 149.0M531.5 400.0L782.5 149.0M538.5 400.0L789.5 149.0M545.5 400.0L796.5 149.0M552.5 400.0L803.5 149.0M559.5 400.0L810.5 149.0M566.5 400.0L817.5 149.0M573.5 400.0L824.5 149.0M580.5 400.0L831.5 149.0M587.5 400.0L838.5 149.0M594.5 400.0L845.5 149.0M601.5 400.0L852.5 149.0M608.5 400.0L859.5 149.0"/><path d="M-48.5 140.0L-41.5 147.0M-38.0 150.5L-31.0 157.5M-27.5 161.0L-20.5 168.0M-17.0 171.5L-10.0 178.5M-6.5 182.0L0.5 189.0M4.0 192.5L11.0 199.5M14.5 203.0L21.5 210.0M25.0 213.5L32.0 220.5M35.5 224.0L42.5 231.0M46.0 234.5L53.0 241.5M56.5 245.0L63.5 252.0M67.0 255.5L74.0 262.5M77.5 266.0L84.5 273.0M88.0 276.5L95.0 283.5M98.5 287.0L105.5 294.0M109.0 297.5L116.0 304.5M119.5 308.0L126.5 315.0M130.0 318.5L137.0 325.5M140.5 329.0L147.5 336.0M151.0 339.5L158.0 346.5M161.5 350.0L168.5 357.0M172.0 360.5L179.0 367.5M182.5 371.0L189.5 378.0M193.0 381.5L200.0 388.5M203.5 392.0L210.5 399.0M214.0 402.5L217.5 406.0M-38.0 143.5L-31.0 150.5M-27.5 154.0L-20.5 161.0M-17.0 164.5L-10.0 171.5M-6.5 175.0L0.5 182.0M4.0 185.5L11.0 192.5M14.5 196.0L21.5 203.0M25.0 206.5L32.0 213.5M35.5 217.0L42.5 224.0M46.0 227.5L53.0 234.5M56.5 238.0L63.5 245.0M67.0 248.5L74.0 255.5M77.5 259.0L84.5 266.0M88.0 269.5L95.0 276.5M98.5 280.0L105.5 287.0M109.0 290.5L116.0 297.5M119.5 301.0L126.5 308.0M130.0 311.5L137.0 318.5M140.5 322.0L147.5 329.0M151.0 332.5L158.0 339.5M161.5 343.0L168.5 350.0M172.0 353.5L179.0 360.5M182.5 364.0L189.5 371.0M193.0 374.5L200.0 381.5M203.5 385.0L210.5 392.0M214.0 395.5L221.0 402.5M-34.5 140.0L-31.0 143.5M-27.5 147.0L-20.5 154.0M-17.0 157.5L-10.0 164.5M-6.5 168.0L0.5 175.0M4.0 178.5L11.0 185.5M14.5 189.0L21.5 196.0M25.0 199.5L32.0 206.5M35.5 210.0L42.5 217.0M46.0 220.5L53.0 227.5M56.5 231.0L63.5 238.0M67.0 241.5L74.0 248.5M77.5 252.0L84.5 259.0M88.0 262.5L95.0 269.5M98.5 273.0L105.5 280.0M109.0 283.5L116.0 290.5M119.5 294.0L126.5 301.0M130.0 304.5L137.0 311.5M140.5 315.0L147.5 322.0M151.0 325.5L158.0 332.5M161.5 336.0L168.5 343.0M172.0 346.5L179.0 353.5M182.5 357.0L189.5 364.0M193.0 367.5L200.0 374.5M203.5 378.0L210.5 385.0M214.0 388.5L221.0 395.5M224.5 399.0L231.5 406.0M-27.5 140.0L-20.5 147.0M-17.0 150.5L-10.0 157.5M-6.5 161.0L0.5 168.0M4.0 171.5L11.0 178.5M14.5 182.0L21.5 189.0M25.0 192.5L32.0 199.5M35.5 203.0L42.5 210.0M46.0 213.5L53.0 220.5M56.5 224.0L63.5 231.0M67.0 234.5L74.0 241.5M77.5 245.0L84.5 252.0M88.0 255.5L95.0 262.5M98.5 266.0L105.5 273.0M109.0 276.5L116.0 283.5M119.5 287.0L126.5 294.0M130.0 297.5L137.0 304.5M140.5 308.0L147.5 315.0M151.0 318.5L158.0 325.5M161.5 329.0L168.5 336.0M172.0 339.5L179.0 346.5M182.5 350.0L189.5 357.0M193.0 360.5L200.0 367.5M203.5 371.0L210.5 378.0M214.0 381.5L221.0 388.5M224.5 392.0L231.5 399.0M235.0 402.5L238.5 406.0M-17.0 143.5L-10.0 150.5M-6.5 154.0L0.5 161.0M4.0 164.5L11.0 171.5M14.5 175.0L21.5 182.0M25.0 185.5L32.0 192.5M35.5 196.0L42.5 203.0M46.0 206.5L53.0 213.5M56.5 217.0L63.5 224.0M67.0 227.5L74.0 234.5M77.5 238.0L84.5 245.0M88.0 248.5L95.0 255.5M98.5 259.0L105.5 266.0M109.0 269.5L116.0 276.5M119.5 280.0L126.5 287.0M130.0 290.5L137.0 297.5M140.5 301.0L147.5 308.0M151.0 311.5L158.0 318.5M161.5 322.0L168.5 329.0M172.0 332.5L179.0 339.5M182.5 343.0L189.5 350.0M193.0 353.5L200.0 360.5M203.5 364.0L210.5 371.0M214.0 374.5L221.0 381.5M224.5 385.0L231.5 392.0M235.0 395.5L242.0 402.5M-13.5 140.0L-10.0 143.5M-6.5 147.0L0.5 154.0M4.0 157.5L11.0 164.5M14.5 168.0L21.5 175.0M25.0 178.5L32.0 185.5M35.5 189.0L42.5 196.0M46.0 199.5L53.0 206.5M56.5 210.0L63.5 217.0M67.0 220.5L74.0 227.5M77.5 231.0L84.5 238.0M88.0 241.5L95.0 248.5M98.5 252.0L105.5 259.0M109.0 262.5L116.0 269.5M119.5 273.0L126.5 280.0M130.0 283.5L137.0 290.5M140.5 294.0L147.5 301.0M151.0 304.5L158.0 311.5M161.5 315.0L168.5 322.0M172.0 325.5L179.0 332.5M182.5 336.0L189.5 343.0M193.0 346.5L200.0 353.5M203.5 357.0L210.5 364.0M214.0 367.5L221.0 374.5M224.5 378.0L231.5 385.0M235.0 388.5L242.0 395.5M245.5 399.0L252.5 406.0M-6.5 140.0L0.5 147.0M4.0 150.5L11.0 157.5M14.5 161.0L21.5 168.0M25.0 171.5L32.0 178.5M35.5 182.0L42.5 189.0M46.0 192.5L53.0 199.5M56.5 203.0L63.5 210.0M67.0 213.5L74.0 220.5M77.5 224.0L84.5 231.0M88.0 234.5L95.0 241.5M98.5 245.0L105.5 252.0M109.0 255.5L116.0 262.5M119.5 266.0L126.5 273.0M130.0 276.5L137.0 283.5M140.5 287.0L147.5 294.0M151.0 297.5L158.0 304.5M161.5 308.0L168.5 315.0M172.0 318.5L179.0 325.5M182.5 329.0L189.5 336.0M193.0 339.5L200.0 346.5M203.5 350.0L210.5 357.0M214.0 360.5L221.0 367.5M224.5 371.0L231.5 378.0M235.0 381.5L242.0 388.5M245.5 392.0L252.5 399.0M256.0 402.5L259.5 406.0M4.0 143.5L11.0 150.5M14.5 154.0L21.5 161.0M25.0 164.5L32.0 171.5M35.5 175.0L42.5 182.0M46.0 185.5L53.0 192.5M56.5 196.0L63.5 203.0M67.0 206.5L74.0 213.5M77.5 217.0L84.5 224.0M88.0 227.5L95.0 234.5M98.5 238.0L105.5 245.0M109.0 248.5L116.0 255.5M119.5 259.0L126.5 266.0M130.0 269.5L137.0 276.5M140.5 280.0L147.5 287.0M151.0 290.5L158.0 297.5M161.5 301.0L168.5 308.0M172.0 311.5L179.0 318.5M182.5 322.0L189.5 329.0M193.0 332.5L200.0 339.5M203.5 343.0L210.5 350.0M214.0 353.5L221.0 360.5M224.5 364.0L231.5 371.0M235.0 374.5L242.0 381.5M245.5 385.0L252.5 392.0M256.0 395.5L263.0 402.5M7.5 140.0L11.0 143.5M14.5 147.0L21.5 154.0M25.0 157.5L32.0 164.5M35.5 168.0L42.5 175.0M46.0 178.5L53.0 185.5M56.5 189.0L63.5 196.0M67.0 199.5L74.0 206.5M77.5 210.0L84.5 217.0M88.0 220.5L95.0 227.5M98.5 231.0L105.5 238.0M109.0 241.5L116.0 248.5M119.5 252.0L126.5 259.0M130.0 262.5L137.0 269.5M140.5 273.0L147.5 280.0M151.0 283.5L158.0 290.5M161.5 294.0L168.5 301.0M172.0 304.5L179.0 311.5M182.5 315.0L189.5 322.0M193.0 325.5L200.0 332.5M203.5 336.0L210.5 343.0M214.0 346.5L221.0 353.5M224.5 357.0L231.5 364.0M235.0 367.5L242.0 374.5M245.5 378.0L252.5 385.0M256.0 388.5L263.0 395.5M266.5 399.0L273.5 406.0M14.5 140.0L21.5 147.0M25.0 150.5L32.0 157.5M35.5 161.0L42.5 168.0M46.0 171.5L53.0 178.5M56.5 182.0L63.5 189.0M67.0 192.5L74.0 199.5M77.5 203.0L84.5 210.0M88.0 213.5L95.0 220.5M98.5 224.0L105.5 231.0M109.0 234.5L116.0 241.5M119.5 245.0L126.5 252.0M130.0 255.5L137.0 262.5M140.5 266.0L147.5 273.0M151.0 276.5L158.0 283.5M161.5 287.0L168.5 294.0M172.0 297.5L179.0 304.5M182.5 308.0L189.5 315.0M193.0 318.5L200.0 325.5M203.5 329.0L210.5 336.0M214.0 339.5L221.0 346.5M224.5 350.0L231.5 357.0M235.0 360.5L242.0 367.5M245.5 371.0L252.5 378.0M256.0 381.5L263.0 388.5M266.5 392.0L273.5 399.0M277.0 402.5L280.5 406.0M25.0 143.5L32.0 150.5M35.5 154.0L42.5 161.0M46.0 164.5L53.0 171.5M56.5 175.0L63.5 182.0M67.0 185.5L74.0 192.5M77.5 196.0L84.5 203.0M88.0 206.5L95.0 213.5M98.5 217.0L105.5 224.0M109.0 227.5L116.0 234.5M119.5 238.0L126.5 245.0M130.0 248.5L137.0 255.5M140.5 259.0L147.5 266.0M151.0 269.5L158.0 276.5M161.5 280.0L168.5 287.0M172.0 290.5L179.0 297.5M182.5 301.0L189.5 308.0M193.0 311.5L200.0 318.5M203.5 322.0L210.5 329.0M214.0 332.5L221.0 339.5M224.5 343.0L231.5 350.0M235.0 353.5L242.0 360.5M245.5 364.0L252.5 371.0M256.0 374.5L263.0 381.5M266.5 385.0L273.5 392.0M277.0 395.5L284.0 402.5M28.5 140.0L32.0 143.5M35.5 147.0L42.5 154.0M46.0 157.5L53.0 164.5M56.5 168.0L63.5 175.0M67.0 178.5L74.0 185.5M77.5 189.0L84.5 196.0M88.0 199.5L95.0 206.5M98.5 210.0L105.5 217.0M109.0 220.5L116.0 227.5M119.5 231.0L126.5 238.0M130.0 241.5L137.0 248.5M140.5 252.0L147.5 259.0M151.0 262.5L158.0 269.5M161.5 273.0L168.5 280.0M172.0 283.5L179.0 290.5M182.5 294.0L189.5 301.0M193.0 304.5L200.0 311.5M203.5 315.0L210.5 322.0M214.0 325.5L221.0 332.5M224.5 336.0L231.5 343.0M235.0 346.5L242.0 353.5M245.5 357.0L252.5 364.0M256.0 367.5L263.0 374.5M266.5 378.0L273.5 385.0M277.0 388.5L284.0 395.5M287.5 399.0L294.5 406.0M35.5 140.0L42.5 147.0M46.0 150.5L53.0 157.5M56.5 161.0L63.5 168.0M67.0 171.5L74.0 178.5M77.5 182.0L84.5 189.0M88.0 192.5L95.0 199.5M98.5 203.0L105.5 210.0M109.0 213.5L116.0 220.5M119.5 224.0L126.5 231.0M130.0 234.5L137.0 241.5M140.5 245.0L147.5 252.0M151.0 255.5L158.0 262.5M161.5 266.0L168.5 273.0M172.0 276.5L179.0 283.5M182.5 287.0L189.5 294.0M193.0 297.5L200.0 304.5M203.5 308.0L210.5 315.0M214.0 318.5L221.0 325.5M224.5 329.0L231.5 336.0M235.0 339.5L242.0 346.5M245.5 350.0L252.5 357.0M256.0 360.5L263.0 367.5M266.5 371.0L273.5 378.0M277.0 381.5L284.0 388.5M287.5 392.0L294.5 399.0M298.0 402.5L301.5 406.0M46.0 143.5L53.0 150.5M56.5 154.0L63.5 161.0M67.0 164.5L74.0 171.5M77.5 175.0L84.5 182.0M88.0 185.5L95.0 192.5M98.5 196.0L105.5 203.0M109.0 206.5L116.0 213.5M119.5 217.0L126.5 224.0M130.0 227.5L137.0 234.5M140.5 238.0L147.5 245.0M151.0 248.5L158.0 255.5M161.5 259.0L168.5 266.0M172.0 269.5L179.0 276.5M182.5 280.0L189.5 287.0M193.0 290.5L200.0 297.5M203.5 301.0L210.5 308.0M214.0 311.5L221.0 318.5M224.5 322.0L231.5 329.0M235.0 332.5L242.0 339.5M245.5 343.0L252.5 350.0M256.0 353.5L263.0 360.5M266.5 364.0L273.5 371.0M277.0 374.5L284.0 381.5M287.5 385.0L294.5 392.0M298.0 395.5L305.0 402.5M49.5 140.0L53.0 143.5M56.5 147.0L63.5 154.0M67.0 157.5L74.0 164.5M77.5 168.0L84.5 175.0M88.0 178.5L95.0 185.5M98.5 189.0L105.5 196.0M109.0 199.5L116.0 206.5M119.5 210.0L126.5 217.0M130.0 220.5L137.0 227.5M140.5 231.0L147.5 238.0M151.0 241.5L158.0 248.5M161.5 252.0L168.5 259.0M172.0 262.5L179.0 269.5M182.5 273.0L189.5 280.0M193.0 283.5L200.0 290.5M203.5 294.0L210.5 301.0M214.0 304.5L221.0 311.5M224.5 315.0L231.5 322.0M235.0 325.5L242.0 332.5M245.5 336.0L252.5 343.0M256.0 346.5L263.0 353.5M266.5 357.0L273.5 364.0M277.0 367.5L284.0 374.5M287.5 378.0L294.5 385.0M298.0 388.5L305.0 395.5M308.5 399.0L315.5 406.0M56.5 140.0L63.5 147.0M67.0 150.5L74.0 157.5M77.5 161.0L84.5 168.0M88.0 171.5L95.0 178.5M98.5 182.0L105.5 189.0M109.0 192.5L116.0 199.5M119.5 203.0L126.5 210.0M130.0 213.5L137.0 220.5M140.5 224.0L147.5 231.0M151.0 234.5L158.0 241.5M161.5 245.0L168.5 252.0M172.0 255.5L179.0 262.5M182.5 266.0L189.5 273.0M193.0 276.5L200.0 283.5M203.5 287.0L210.5 294.0M214.0 297.5L221.0 304.5M224.5 308.0L231.5 315.0M235.0 318.5L242.0 325.5M245.5 329.0L252.5 336.0M256.0 339.5L263.0 346.5M266.5 350.0L273.5 357.0M277.0 360.5L284.0 367.5M287.5 371.0L294.5 378.0M298.0 381.5L305.0 388.5M308.5 392.0L315.5 399.0M319.0 402.5L322.5 406.0M67.0 143.5L74.0 150.5M77.5 154.0L84.5 161.0M88.0 164.5L95.0 171.5M98.5 175.0L105.5 182.0M109.0 185.5L116.0 192.5M119.5 196.0L126.5 203.0M130.0 206.5L137.0 213.5M140.5 217.0L147.5 224.0M151.0 227.5L158.0 234.5M161.5 238.0L168.5 245.0M172.0 248.5L179.0 255.5M182.5 259.0L189.5 266.0M193.0 269.5L200.0 276.5M203.5 280.0L210.5 287.0M214.0 290.5L221.0 297.5M224.5 301.0L231.5 308.0M235.0 311.5L242.0 318.5M245.5 322.0L252.5 329.0M256.0 332.5L263.0 339.5M266.5 343.0L273.5 350.0M277.0 353.5L284.0 360.5M287.5 364.0L294.5 371.0M298.0 374.5L305.0 381.5M308.5 385.0L315.5 392.0M319.0 395.5L326.0 402.5M70.5 140.0L74.0 143.5M77.5 147.0L84.5 154.0M88.0 157.5L95.0 164.5M98.5 168.0L105.5 175.0M109.0 178.5L116.0 185.5M119.5 189.0L126.5 196.0M130.0 199.5L137.0 206.5M140.5 210.0L147.5 217.0M151.0 220.5L158.0 227.5M161.5 231.0L168.5 238.0M172.0 241.5L179.0 248.5M182.5 252.0L189.5 259.0M193.0 262.5L200.0 269.5M203.5 273.0L210.5 280.0M214.0 283.5L221.0 290.5M224.5 294.0L231.5 301.0M235.0 304.5L242.0 311.5M245.5 315.0L252.5 322.0M256.0 325.5L263.0 332.5M266.5 336.0L273.5 343.0M277.0 346.5L284.0 353.5M287.5 357.0L294.5 364.0M298.0 367.5L305.0 374.5M308.5 378.0L315.5 385.0M319.0 388.5L326.0 395.5M329.5 399.0L336.5 406.0M77.5 140.0L84.5 147.0M88.0 150.5L95.0 157.5M98.5 161.0L105.5 168.0M109.0 171.5L116.0 178.5M119.5 182.0L126.5 189.0M130.0 192.5L137.0 199.5M140.5 203.0L147.5 210.0M151.0 213.5L158.0 220.5M161.5 224.0L168.5 231.0M172.0 234.5L179.0 241.5M182.5 245.0L189.5 252.0M193.0 255.5L200.0 262.5M203.5 266.0L210.5 273.0M214.0 276.5L221.0 283.5M224.5 287.0L231.5 294.0M235.0 297.5L242.0 304.5M245.5 308.0L252.5 315.0M256.0 318.5L263.0 325.5M266.5 329.0L273.5 336.0M277.0 339.5L284.0 346.5M287.5 350.0L294.5 357.0M298.0 360.5L305.0 367.5M308.5 371.0L315.5 378.0M319.0 381.5L326.0 388.5M329.5 392.0L336.5 399.0M340.0 402.5L343.5 406.0M88.0 143.5L95.0 150.5M98.5 154.0L105.5 161.0M109.0 164.5L116.0 171.5M119.5 175.0L126.5 182.0M130.0 185.5L137.0 192.5M140.5 196.0L147.5 203.0M151.0 206.5L158.0 213.5M161.5 217.0L168.5 224.0M172.0 227.5L179.0 234.5M182.5 238.0L189.5 245.0M193.0 248.5L200.0 255.5M203.5 259.0L210.5 266.0M214.0 269.5L221.0 276.5M224.5 280.0L231.5 287.0M235.0 290.5L242.0 297.5M245.5 301.0L252.5 308.0M256.0 311.5L263.0 318.5M266.5 322.0L273.5 329.0M277.0 332.5L284.0 339.5M287.5 343.0L294.5 350.0M298.0 353.5L305.0 360.5M308.5 364.0L315.5 371.0M319.0 374.5L326.0 381.5M329.5 385.0L336.5 392.0M340.0 395.5L347.0 402.5M91.5 140.0L95.0 143.5M98.5 147.0L105.5 154.0M109.0 157.5L116.0 164.5M119.5 168.0L126.5 175.0M130.0 178.5L137.0 185.5M140.5 189.0L147.5 196.0M151.0 199.5L158.0 206.5M161.5 210.0L168.5 217.0M172.0 220.5L179.0 227.5M182.5 231.0L189.5 238.0M193.0 241.5L200.0 248.5M203.5 252.0L210.5 259.0M214.0 262.5L221.0 269.5M224.5 273.0L231.5 280.0M235.0 283.5L242.0 290.5M245.5 294.0L252.5 301.0M256.0 304.5L263.0 311.5M266.5 315.0L273.5 322.0M277.0 325.5L284.0 332.5M287.5 336.0L294.5 343.0M298.0 346.5L305.0 353.5M308.5 357.0L315.5 364.0M319.0 367.5L326.0 374.5M329.5 378.0L336.5 385.0M340.0 388.5L347.0 395.5M350.5 399.0L357.5 406.0M98.5 140.0L105.5 147.0M109.0 150.5L116.0 157.5M119.5 161.0L126.5 168.0M130.0 171.5L137.0 178.5M140.5 182.0L147.5 189.0M151.0 192.5L158.0 199.5M161.5 203.0L168.5 210.0M172.0 213.5L179.0 220.5M182.5 224.0L189.5 231.0M193.0 234.5L200.0 241.5M203.5 245.0L210.5 252.0M214.0 255.5L221.0 262.5M224.5 266.0L231.5 273.0M235.0 276.5L242.0 283.5M245.5 287.0L252.5 294.0M256.0 297.5L263.0 304.5M266.5 308.0L273.5 315.0M277.0 318.5L284.0 325.5M287.5 329.0L294.5 336.0M298.0 339.5L305.0 346.5M308.5 350.0L315.5 357.0M319.0 360.5L326.0 367.5M329.5 371.0L336.5 378.0M340.0 381.5L347.0 388.5M350.5 392.0L357.5 399.0M361.0 402.5L364.5 406.0M109.0 143.5L116.0 150.5M119.5 154.0L126.5 161.0M130.0 164.5L137.0 171.5M140.5 175.0L147.5 182.0M151.0 185.5L158.0 192.5M161.5 196.0L168.5 203.0M172.0 206.5L179.0 213.5M182.5 217.0L189.5 224.0M193.0 227.5L200.0 234.5M203.5 238.0L210.5 245.0M214.0 248.5L221.0 255.5M224.5 259.0L231.5 266.0M235.0 269.5L242.0 276.5M245.5 280.0L252.5 287.0M256.0 290.5L263.0 297.5M266.5 301.0L273.5 308.0M277.0 311.5L284.0 318.5M287.5 322.0L294.5 329.0M298.0 332.5L305.0 339.5M308.5 343.0L315.5 350.0M319.0 353.5L326.0 360.5M329.5 364.0L336.5 371.0M340.0 374.5L347.0 381.5M350.5 385.0L357.5 392.0M361.0 395.5L368.0 402.5M112.5 140.0L116.0 143.5M119.5 147.0L126.5 154.0M130.0 157.5L137.0 164.5M140.5 168.0L147.5 175.0M151.0 178.5L158.0 185.5M161.5 189.0L168.5 196.0M172.0 199.5L179.0 206.5M182.5 210.0L189.5 217.0M193.0 220.5L200.0 227.5M203.5 231.0L210.5 238.0M214.0 241.5L221.0 248.5M224.5 252.0L231.5 259.0M235.0 262.5L242.0 269.5M245.5 273.0L252.5 280.0M256.0 283.5L263.0 290.5M266.5 294.0L273.5 301.0M277.0 304.5L284.0 311.5M287.5 315.0L294.5 322.0M298.0 325.5L305.0 332.5M308.5 336.0L315.5 343.0M319.0 346.5L326.0 353.5M329.5 357.0L336.5 364.0M340.0 367.5L347.0 374.5M350.5 378.0L357.5 385.0M361.0 388.5L368.0 395.5M371.5 399.0L378.5 406.0M119.5 140.0L126.5 147.0M130.0 150.5L137.0 157.5M140.5 161.0L147.5 168.0M151.0 171.5L158.0 178.5M161.5 182.0L168.5 189.0M172.0 192.5L179.0 199.5M182.5 203.0L189.5 210.0M193.0 213.5L200.0 220.5M203.5 224.0L210.5 231.0M214.0 234.5L221.0 241.5M224.5 245.0L231.5 252.0M235.0 255.5L242.0 262.5M245.5 266.0L252.5 273.0M256.0 276.5L263.0 283.5M266.5 287.0L273.5 294.0M277.0 297.5L284.0 304.5M287.5 308.0L294.5 315.0M298.0 318.5L305.0 325.5M308.5 329.0L315.5 336.0M319.0 339.5L326.0 346.5M329.5 350.0L336.5 357.0M340.0 360.5L347.0 367.5M350.5 371.0L357.5 378.0M361.0 381.5L368.0 388.5M371.5 392.0L378.5 399.0M382.0 402.5L385.5 406.0M130.0 143.5L137.0 150.5M140.5 154.0L147.5 161.0M151.0 164.5L158.0 171.5M161.5 175.0L168.5 182.0M172.0 185.5L179.0 192.5M182.5 196.0L189.5 203.0M193.0 206.5L200.0 213.5M203.5 217.0L210.5 224.0M214.0 227.5L221.0 234.5M224.5 238.0L231.5 245.0M235.0 248.5L242.0 255.5M245.5 259.0L252.5 266.0M256.0 269.5L263.0 276.5M266.5 280.0L273.5 287.0M277.0 290.5L284.0 297.5M287.5 301.0L294.5 308.0M298.0 311.5L305.0 318.5M308.5 322.0L315.5 329.0M319.0 332.5L326.0 339.5M329.5 343.0L336.5 350.0M340.0 353.5L347.0 360.5M350.5 364.0L357.5 371.0M361.0 374.5L368.0 381.5M371.5 385.0L378.5 392.0M382.0 395.5L389.0 402.5M133.5 140.0L137.0 143.5M140.5 147.0L147.5 154.0M151.0 157.5L158.0 164.5M161.5 168.0L168.5 175.0M172.0 178.5L179.0 185.5M182.5 189.0L189.5 196.0M193.0 199.5L200.0 206.5M203.5 210.0L210.5 217.0M214.0 220.5L221.0 227.5M224.5 231.0L231.5 238.0M235.0 241.5L242.0 248.5M245.5 252.0L252.5 259.0M256.0 262.5L263.0 269.5M266.5 273.0L273.5 280.0M277.0 283.5L284.0 290.5M287.5 294.0L294.5 301.0M298.0 304.5L305.0 311.5M308.5 315.0L315.5 322.0M319.0 325.5L326.0 332.5M329.5 336.0L336.5 343.0M340.0 346.5L347.0 353.5M350.5 357.0L357.5 364.0M361.0 367.5L368.0 374.5M371.5 378.0L378.5 385.0M382.0 388.5L389.0 395.5M392.5 399.0L399.5 406.0M140.5 140.0L147.5 147.0M151.0 150.5L158.0 157.5M161.5 161.0L168.5 168.0M172.0 171.5L179.0 178.5M182.5 182.0L189.5 189.0M193.0 192.5L200.0 199.5M203.5 203.0L210.5 210.0M214.0 213.5L221.0 220.5M224.5 224.0L231.5 231.0M235.0 234.5L242.0 241.5M245.5 245.0L252.5 252.0M256.0 255.5L263.0 262.5M266.5 266.0L273.5 273.0M277.0 276.5L284.0 283.5M287.5 287.0L294.5 294.0M298.0 297.5L305.0 304.5M308.5 308.0L315.5 315.0M319.0 318.5L326.0 325.5M329.5 329.0L336.5 336.0M340.0 339.5L347.0 346.5M350.5 350.0L357.5 357.0M361.0 360.5L368.0 367.5M371.5 371.0L378.5 378.0M382.0 381.5L389.0 388.5M392.5 392.0L399.5 399.0M403.0 402.5L406.5 406.0M151.0 143.5L158.0 150.5M161.5 154.0L168.5 161.0M172.0 164.5L179.0 171.5M182.5 175.0L189.5 182.0M193.0 185.5L200.0 192.5M203.5 196.0L210.5 203.0M214.0 206.5L221.0 213.5M224.5 217.0L231.5 224.0M235.0 227.5L242.0 234.5M245.5 238.0L252.5 245.0M256.0 248.5L263.0 255.5M266.5 259.0L273.5 266.0M277.0 269.5L284.0 276.5M287.5 280.0L294.5 287.0M298.0 290.5L305.0 297.5M308.5 301.0L315.5 308.0M319.0 311.5L326.0 318.5M329.5 322.0L336.5 329.0M340.0 332.5L347.0 339.5M350.5 343.0L357.5 350.0M361.0 353.5L368.0 360.5M371.5 364.0L378.5 371.0M382.0 374.5L389.0 381.5M392.5 385.0L399.5 392.0M403.0 395.5L410.0 402.5M154.5 140.0L158.0 143.5M161.5 147.0L168.5 154.0M172.0 157.5L179.0 164.5M182.5 168.0L189.5 175.0M193.0 178.5L200.0 185.5M203.5 189.0L210.5 196.0M214.0 199.5L221.0 206.5M224.5 210.0L231.5 217.0M235.0 220.5L242.0 227.5M245.5 231.0L252.5 238.0M256.0 241.5L263.0 248.5M266.5 252.0L273.5 259.0M277.0 262.5L284.0 269.5M287.5 273.0L294.5 280.0M298.0 283.5L305.0 290.5M308.5 294.0L315.5 301.0M319.0 304.5L326.0 311.5M329.5 315.0L336.5 322.0M340.0 325.5L347.0 332.5M350.5 336.0L357.5 343.0M361.0 346.5L368.0 353.5M371.5 357.0L378.5 364.0M382.0 367.5L389.0 374.5M392.5 378.0L399.5 385.0M403.0 388.5L410.0 395.5M413.5 399.0L420.5 406.0M161.5 140.0L168.5 147.0M172.0 150.5L179.0 157.5M182.5 161.0L189.5 168.0M193.0 171.5L200.0 178.5M203.5 182.0L210.5 189.0M214.0 192.5L221.0 199.5M224.5 203.0L231.5 210.0M235.0 213.5L242.0 220.5M245.5 224.0L252.5 231.0M256.0 234.5L263.0 241.5M266.5 245.0L273.5 252.0M277.0 255.5L284.0 262.5M287.5 266.0L294.5 273.0M298.0 276.5L305.0 283.5M308.5 287.0L315.5 294.0M319.0 297.5L326.0 304.5M329.5 308.0L336.5 315.0M340.0 318.5L347.0 325.5M350.5 329.0L357.5 336.0M361.0 339.5L368.0 346.5M371.5 350.0L378.5 357.0M382.0 360.5L389.0 367.5M392.5 371.0L399.5 378.0M403.0 381.5L410.0 388.5M413.5 392.0L420.5 399.0M424.0 402.5L427.5 406.0M172.0 143.5L179.0 150.5M182.5 154.0L189.5 161.0M193.0 164.5L200.0 171.5M203.5 175.0L210.5 182.0M214.0 185.5L221.0 192.5M224.5 196.0L231.5 203.0M235.0 206.5L242.0 213.5M245.5 217.0L252.5 224.0M256.0 227.5L263.0 234.5M266.5 238.0L273.5 245.0M277.0 248.5L284.0 255.5M287.5 259.0L294.5 266.0M298.0 269.5L305.0 276.5M308.5 280.0L315.5 287.0M319.0 290.5L326.0 297.5M329.5 301.0L336.5 308.0M340.0 311.5L347.0 318.5M350.5 322.0L357.5 329.0M361.0 332.5L368.0 339.5M371.5 343.0L378.5 350.0M382.0 353.5L389.0 360.5M392.5 364.0L399.5 371.0M403.0 374.5L410.0 381.5M413.5 385.0L420.5 392.0M424.0 395.5L431.0 402.5M175.5 140.0L179.0 143.5M182.5 147.0L189.5 154.0M193.0 157.5L200.0 164.5M203.5 168.0L210.5 175.0M214.0 178.5L221.0 185.5M224.5 189.0L231.5 196.0M235.0 199.5L242.0 206.5M245.5 210.0L252.5 217.0M256.0 220.5L263.0 227.5M266.5 231.0L273.5 238.0M277.0 241.5L284.0 248.5M287.5 252.0L294.5 259.0M298.0 262.5L305.0 269.5M308.5 273.0L315.5 280.0M319.0 283.5L326.0 290.5M329.5 294.0L336.5 301.0M340.0 304.5L347.0 311.5M350.5 315.0L357.5 322.0M361.0 325.5L368.0 332.5M371.5 336.0L378.5 343.0M382.0 346.5L389.0 353.5M392.5 357.0L399.5 364.0M403.0 367.5L410.0 374.5M413.5 378.0L420.5 385.0M424.0 388.5L431.0 395.5M434.5 399.0L441.5 406.0M182.5 140.0L189.5 147.0M193.0 150.5L200.0 157.5M203.5 161.0L210.5 168.0M214.0 171.5L221.0 178.5M224.5 182.0L231.5 189.0M235.0 192.5L242.0 199.5M245.5 203.0L252.5 210.0M256.0 213.5L263.0 220.5M266.5 224.0L273.5 231.0M277.0 234.5L284.0 241.5M287.5 245.0L294.5 252.0M298.0 255.5L305.0 262.5M308.5 266.0L315.5 273.0M319.0 276.5L326.0 283.5M329.5 287.0L336.5 294.0M340.0 297.5L347.0 304.5M350.5 308.0L357.5 315.0M361.0 318.5L368.0 325.5M371.5 329.0L378.5 336.0M382.0 339.5L389.0 346.5M392.5 350.0L399.5 357.0M403.0 360.5L410.0 367.5M413.5 371.0L420.5 378.0M424.0 381.5L431.0 388.5M434.5 392.0L441.5 399.0M445.0 402.5L448.5 406.0M193.0 143.5L200.0 150.5M203.5 154.0L210.5 161.0M214.0 164.5L221.0 171.5M224.5 175.0L231.5 182.0M235.0 185.5L242.0 192.5M245.5 196.0L252.5 203.0M256.0 206.5L263.0 213.5M266.5 217.0L273.5 224.0M277.0 227.5L284.0 234.5M287.5 238.0L294.5 245.0M298.0 248.5L305.0 255.5M308.5 259.0L315.5 266.0M319.0 269.5L326.0 276.5M329.5 280.0L336.5 287.0M340.0 290.5L347.0 297.5M350.5 301.0L357.5 308.0M361.0 311.5L368.0 318.5M371.5 322.0L378.5 329.0M382.0 332.5L389.0 339.5M392.5 343.0L399.5 350.0M403.0 353.5L410.0 360.5M413.5 364.0L420.5 371.0M424.0 374.5L431.0 381.5M434.5 385.0L441.5 392.0M445.0 395.5L452.0 402.5M196.5 140.0L200.0 143.5M203.5 147.0L210.5 154.0M214.0 157.5L221.0 164.5M224.5 168.0L231.5 175.0M235.0 178.5L242.0 185.5M245.5 189.0L252.5 196.0M256.0 199.5L263.0 206.5M266.5 210.0L273.5 217.0M277.0 220.5L284.0 227.5M287.5 231.0L294.5 238.0M298.0 241.5L305.0 248.5M308.5 252.0L315.5 259.0M319.0 262.5L326.0 269.5M329.5 273.0L336.5 280.0M340.0 283.5L347.0 290.5M350.5 294.0L357.5 301.0M361.0 304.5L368.0 311.5M371.5 315.0L378.5 322.0M382.0 325.5L389.0 332.5M392.5 336.0L399.5 343.0M403.0 346.5L410.0 353.5M413.5 357.0L420.5 364.0M424.0 367.5L431.0 374.5M434.5 378.0L441.5 385.0M445.0 388.5L452.0 395.5M455.5 399.0L462.5 406.0M203.5 140.0L210.5 147.0M214.0 150.5L221.0 157.5M224.5 161.0L231.5 168.0M235.0 171.5L242.0 178.5M245.5 182.0L252.5 189.0M256.0 192.5L263.0 199.5M266.5 203.0L273.5 210.0M277.0 213.5L284.0 220.5M287.5 224.0L294.5 231.0M298.0 234.5L305.0 241.5M308.5 245.0L315.5 252.0M319.0 255.5L326.0 262.5M329.5 266.0L336.5 273.0M340.0 276.5L347.0 283.5M350.5 287.0L357.5 294.0M361.0 297.5L368.0 304.5M371.5 308.0L378.5 315.0M382.0 318.5L389.0 325.5M392.5 329.0L399.5 336.0M403.0 339.5L410.0 346.5M413.5 350.0L420.5 357.0M424.0 360.5L431.0 367.5M434.5 371.0L441.5 378.0M445.0 381.5L452.0 388.5M455.5 392.0L462.5 399.0M466.0 402.5L469.5 406.0M214.0 143.5L221.0 150.5M224.5 154.0L231.5 161.0M235.0 164.5L242.0 171.5M245.5 175.0L252.5 182.0M256.0 185.5L263.0 192.5M266.5 196.0L273.5 203.0M277.0 206.5L284.0 213.5M287.5 217.0L294.5 224.0M298.0 227.5L305.0 234.5M308.5 238.0L315.5 245.0M319.0 248.5L326.0 255.5M329.5 259.0L336.5 266.0M340.0 269.5L347.0 276.5M350.5 280.0L357.5 287.0M361.0 290.5L368.0 297.5M371.5 301.0L378.5 308.0M382.0 311.5L389.0 318.5M392.5 322.0L399.5 329.0M403.0 332.5L410.0 339.5M413.5 343.0L420.5 350.0M424.0 353.5L431.0 360.5M434.5 364.0L441.5 371.0M445.0 374.5L452.0 381.5M455.5 385.0L462.5 392.0M466.0 395.5L473.0 402.5M217.5 140.0L221.0 143.5M224.5 147.0L231.5 154.0M235.0 157.5L242.0 164.5M245.5 168.0L252.5 175.0M256.0 178.5L263.0 185.5M266.5 189.0L273.5 196.0M277.0 199.5L284.0 206.5M287.5 210.0L294.5 217.0M298.0 220.5L305.0 227.5M308.5 231.0L315.5 238.0M319.0 241.5L326.0 248.5M329.5 252.0L336.5 259.0M340.0 262.5L347.0 269.5M350.5 273.0L357.5 280.0M361.0 283.5L368.0 290.5M371.5 294.0L378.5 301.0M382.0 304.5L389.0 311.5M392.5 315.0L399.5 322.0M403.0 325.5L410.0 332.5M413.5 336.0L420.5 343.0M424.0 346.5L431.0 353.5M434.5 357.0L441.5 364.0M445.0 367.5L452.0 374.5M455.5 378.0L462.5 385.0M466.0 388.5L473.0 395.5M476.5 399.0L483.5 406.0M224.5 140.0L231.5 147.0M235.0 150.5L242.0 157.5M245.5 161.0L252.5 168.0M256.0 171.5L263.0 178.5M266.5 182.0L273.5 189.0M277.0 192.5L284.0 199.5M287.5 203.0L294.5 210.0M298.0 213.5L305.0 220.5M308.5 224.0L315.5 231.0M319.0 234.5L326.0 241.5M329.5 245.0L336.5 252.0M340.0 255.5L347.0 262.5M350.5 266.0L357.5 273.0M361.0 276.5L368.0 283.5M371.5 287.0L378.5 294.0M382.0 297.5L389.0 304.5M392.5 308.0L399.5 315.0M403.0 318.5L410.0 325.5M413.5 329.0L420.5 336.0M424.0 339.5L431.0 346.5M434.5 350.0L441.5 357.0M445.0 360.5L452.0 367.5M455.5 371.0L462.5 378.0M466.0 381.5L473.0 388.5M476.5 392.0L483.5 399.0M487.0 402.5L490.5 406.0M235.0 143.5L242.0 150.5M245.5 154.0L252.5 161.0M256.0 164.5L263.0 171.5M266.5 175.0L273.5 182.0M277.0 185.5L284.0 192.5M287.5 196.0L294.5 203.0M298.0 206.5L305.0 213.5M308.5 217.0L315.5 224.0M319.0 227.5L326.0 234.5M329.5 238.0L336.5 245.0M340.0 248.5L347.0 255.5M350.5 259.0L357.5 266.0M361.0 269.5L368.0 276.5M371.5 280.0L378.5 287.0M382.0 290.5L389.0 297.5M392.5 301.0L399.5 308.0M403.0 311.5L410.0 318.5M413.5 322.0L420.5 329.0M424.0 332.5L431.0 339.5M434.5 343.0L441.5 350.0M445.0 353.5L452.0 360.5M455.5 364.0L462.5 371.0M466.0 374.5L473.0 381.5M476.5 385.0L483.5 392.0M487.0 395.5L494.0 402.5M238.5 140.0L242.0 143.5M245.5 147.0L252.5 154.0M256.0 157.5L263.0 164.5M266.5 168.0L273.5 175.0M277.0 178.5L284.0 185.5M287.5 189.0L294.5 196.0M298.0 199.5L305.0 206.5M308.5 210.0L315.5 217.0M319.0 220.5L326.0 227.5M329.5 231.0L336.5 238.0M340.0 241.5L347.0 248.5M350.5 252.0L357.5 259.0M361.0 262.5L368.0 269.5M371.5 273.0L378.5 280.0M382.0 283.5L389.0 290.5M392.5 294.0L399.5 301.0M403.0 304.5L410.0 311.5M413.5 315.0L420.5 322.0M424.0 325.5L431.0 332.5M434.5 336.0L441.5 343.0M445.0 346.5L452.0 353.5M455.5 357.0L462.5 364.0M466.0 367.5L473.0 374.5M476.5 378.0L483.5 385.0M487.0 388.5L494.0 395.5M497.5 399.0L504.5 406.0M245.5 140.0L252.5 147.0M256.0 150.5L263.0 157.5M266.5 161.0L273.5 168.0M277.0 171.5L284.0 178.5M287.5 182.0L294.5 189.0M298.0 192.5L305.0 199.5M308.5 203.0L315.5 210.0M319.0 213.5L326.0 220.5M329.5 224.0L336.5 231.0M340.0 234.5L347.0 241.5M350.5 245.0L357.5 252.0M361.0 255.5L368.0 262.5M371.5 266.0L378.5 273.0M382.0 276.5L389.0 283.5M392.5 287.0L399.5 294.0M403.0 297.5L410.0 304.5M413.5 308.0L420.5 315.0M424.0 318.5L431.0 325.5M434.5 329.0L441.5 336.0M445.0 339.5L452.0 346.5M455.5 350.0L462.5 357.0M466.0 360.5L473.0 367.5M476.5 371.0L483.5 378.0M487.0 381.5L494.0 388.5M497.5 392.0L504.5 399.0M508.0 402.5L511.5 406.0M256.0 143.5L263.0 150.5M266.5 154.0L273.5 161.0M277.0 164.5L284.0 171.5M287.5 175.0L294.5 182.0M298.0 185.5L305.0 192.5M308.5 196.0L315.5 203.0M319.0 206.5L326.0 213.5M329.5 217.0L336.5 224.0M340.0 227.5L347.0 234.5M350.5 238.0L357.5 245.0M361.0 248.5L368.0 255.5M371.5 259.0L378.5 266.0M382.0 269.5L389.0 276.5M392.5 280.0L399.5 287.0M403.0 290.5L410.0 297.5M413.5 301.0L420.5 308.0M424.0 311.5L431.0 318.5M434.5 322.0L441.5 329.0M445.0 332.5L452.0 339.5M455.5 343.0L462.5 350.0M466.0 353.5L473.0 360.5M476.5 364.0L483.5 371.0M487.0 374.5L494.0 381.5M497.5 385.0L504.5 392.0M508.0 395.5L515.0 402.5M259.5 140.0L263.0 143.5M266.5 147.0L273.5 154.0M277.0 157.5L284.0 164.5M287.5 168.0L294.5 175.0M298.0 178.5L305.0 185.5M308.5 189.0L315.5 196.0M319.0 199.5L326.0 206.5M329.5 210.0L336.5 217.0M340.0 220.5L347.0 227.5M350.5 231.0L357.5 238.0M361.0 241.5L368.0 248.5M371.5 252.0L378.5 259.0M382.0 262.5L389.0 269.5M392.5 273.0L399.5 280.0M403.0 283.5L410.0 290.5M413.5 294.0L420.5 301.0M424.0 304.5L431.0 311.5M434.5 315.0L441.5 322.0M445.0 325.5L452.0 332.5M455.5 336.0L462.5 343.0M466.0 346.5L473.0 353.5M476.5 357.0L483.5 364.0M487.0 367.5L494.0 374.5M497.5 378.0L504.5 385.0M508.0 388.5L515.0 395.5M518.5 399.0L525.5 406.0M266.5 140.0L273.5 147.0M277.0 150.5L284.0 157.5M287.5 161.0L294.5 168.0M298.0 171.5L305.0 178.5M308.5 182.0L315.5 189.0M319.0 192.5L326.0 199.5M329.5 203.0L336.5 210.0M340.0 213.5L347.0 220.5M350.5 224.0L357.5 231.0M361.0 234.5L368.0 241.5M371.5 245.0L378.5 252.0M382.0 255.5L389.0 262.5M392.5 266.0L399.5 273.0M403.0 276.5L410.0 283.5M413.5 287.0L420.5 294.0M424.0 297.5L431.0 304.5M434.5 308.0L441.5 315.0M445.0 318.5L452.0 325.5M455.5 329.0L462.5 336.0M466.0 339.5L473.0 346.5M476.5 350.0L483.5 357.0M487.0 360.5L494.0 367.5M497.5 371.0L504.5 378.0M508.0 381.5L515.0 388.5M518.5 392.0L525.5 399.0M529.0 402.5L532.5 406.0M277.0 143.5L284.0 150.5M287.5 154.0L294.5 161.0M298.0 164.5L305.0 171.5M308.5 175.0L315.5 182.0M319.0 185.5L326.0 192.5M329.5 196.0L336.5 203.0M340.0 206.5L347.0 213.5M350.5 217.0L357.5 224.0M361.0 227.5L368.0 234.5M371.5 238.0L378.5 245.0M382.0 248.5L389.0 255.5M392.5 259.0L399.5 266.0M403.0 269.5L410.0 276.5M413.5 280.0L420.5 287.0M424.0 290.5L431.0 297.5M434.5 301.0L441.5 308.0M445.0 311.5L452.0 318.5M455.5 322.0L462.5 329.0M466.0 332.5L473.0 339.5M476.5 343.0L483.5 350.0M487.0 353.5L494.0 360.5M497.5 364.0L504.5 371.0M508.0 374.5L515.0 381.5M518.5 385.0L525.5 392.0M529.0 395.5L536.0 402.5M280.5 140.0L284.0 143.5M287.5 147.0L294.5 154.0M298.0 157.5L305.0 164.5M308.5 168.0L315.5 175.0M319.0 178.5L326.0 185.5M329.5 189.0L336.5 196.0M340.0 199.5L347.0 206.5M350.5 210.0L357.5 217.0M361.0 220.5L368.0 227.5M371.5 231.0L378.5 238.0M382.0 241.5L389.0 248.5M392.5 252.0L399.5 259.0M403.0 262.5L410.0 269.5M413.5 273.0L420.5 280.0M424.0 283.5L431.0 290.5M434.5 294.0L441.5 301.0M445.0 304.5L452.0 311.5M455.5 315.0L462.5 322.0M466.0 325.5L473.0 332.5M476.5 336.0L483.5 343.0M487.0 346.5L494.0 353.5M497.5 357.0L504.5 364.0M508.0 367.5L515.0 374.5M518.5 378.0L525.5 385.0M529.0 388.5L536.0 395.5M539.5 399.0L546.5 406.0M287.5 140.0L294.5 147.0M298.0 150.5L305.0 157.5M308.5 161.0L315.5 168.0M319.0 171.5L326.0 178.5M329.5 182.0L336.5 189.0M340.0 192.5L347.0 199.5M350.5 203.0L357.5 210.0M361.0 213.5L368.0 220.5M371.5 224.0L378.5 231.0M382.0 234.5L389.0 241.5M392.5 245.0L399.5 252.0M403.0 255.5L410.0 262.5M413.5 266.0L420.5 273.0M424.0 276.5L431.0 283.5M434.5 287.0L441.5 294.0M445.0 297.5L452.0 304.5M455.5 308.0L462.5 315.0M466.0 318.5L473.0 325.5M476.5 329.0L483.5 336.0M487.0 339.5L494.0 346.5M497.5 350.0L504.5 357.0M508.0 360.5L515.0 367.5M518.5 371.0L525.5 378.0M529.0 381.5L536.0 388.5M539.5 392.0L546.5 399.0M550.0 402.5L553.5 406.0M298.0 143.5L305.0 150.5M308.5 154.0L315.5 161.0M319.0 164.5L326.0 171.5M329.5 175.0L336.5 182.0M340.0 185.5L347.0 192.5M350.5 196.0L357.5 203.0M361.0 206.5L368.0 213.5M371.5 217.0L378.5 224.0M382.0 227.5L389.0 234.5M392.5 238.0L399.5 245.0M403.0 248.5L410.0 255.5M413.5 259.0L420.5 266.0M424.0 269.5L431.0 276.5M434.5 280.0L441.5 287.0M445.0 290.5L452.0 297.5M455.5 301.0L462.5 308.0M466.0 311.5L473.0 318.5M476.5 322.0L483.5 329.0M487.0 332.5L494.0 339.5M497.5 343.0L504.5 350.0M508.0 353.5L515.0 360.5M518.5 364.0L525.5 371.0M529.0 374.5L536.0 381.5M539.5 385.0L546.5 392.0M550.0 395.5L557.0 402.5M301.5 140.0L305.0 143.5M308.5 147.0L315.5 154.0M319.0 157.5L326.0 164.5M329.5 168.0L336.5 175.0M340.0 178.5L347.0 185.5M350.5 189.0L357.5 196.0M361.0 199.5L368.0 206.5M371.5 210.0L378.5 217.0M382.0 220.5L389.0 227.5M392.5 231.0L399.5 238.0M403.0 241.5L410.0 248.5M413.5 252.0L420.5 259.0M424.0 262.5L431.0 269.5M434.5 273.0L441.5 280.0M445.0 283.5L452.0 290.5M455.5 294.0L462.5 301.0M466.0 304.5L473.0 311.5M476.5 315.0L483.5 322.0M487.0 325.5L494.0 332.5M497.5 336.0L504.5 343.0M508.0 346.5L515.0 353.5M518.5 357.0L525.5 364.0M529.0 367.5L536.0 374.5M539.5 378.0L546.5 385.0M550.0 388.5L557.0 395.5M560.5 399.0L567.5 406.0M308.5 140.0L315.5 147.0M319.0 150.5L326.0 157.5M329.5 161.0L336.5 168.0M340.0 171.5L347.0 178.5M350.5 182.0L357.5 189.0M361.0 192.5L368.0 199.5M371.5 203.0L378.5 210.0M382.0 213.5L389.0 220.5M392.5 224.0L399.5 231.0M403.0 234.5L410.0 241.5M413.5 245.0L420.5 252.0M424.0 255.5L431.0 262.5M434.5 266.0L441.5 273.0M445.0 276.5L452.0 283.5M455.5 287.0L462.5 294.0M466.0 297.5L473.0 304.5M476.5 308.0L483.5 315.0M487.0 318.5L494.0 325.5M497.5 329.0L504.5 336.0M508.0 339.5L515.0 346.5M518.5 350.0L525.5 357.0M529.0 360.5L536.0 367.5M539.5 371.0L546.5 378.0M550.0 381.5L557.0 388.5M560.5 392.0L567.5 399.0M571.0 402.5L574.5 406.0M319.0 143.5L326.0 150.5M329.5 154.0L336.5 161.0M340.0 164.5L347.0 171.5M350.5 175.0L357.5 182.0M361.0 185.5L368.0 192.5M371.5 196.0L378.5 203.0M382.0 206.5L389.0 213.5M392.5 217.0L399.5 224.0M403.0 227.5L410.0 234.5M413.5 238.0L420.5 245.0M424.0 248.5L431.0 255.5M434.5 259.0L441.5 266.0M445.0 269.5L452.0 276.5M455.5 280.0L462.5 287.0M466.0 290.5L473.0 297.5M476.5 301.0L483.5 308.0M487.0 311.5L494.0 318.5M497.5 322.0L504.5 329.0M508.0 332.5L515.0 339.5M518.5 343.0L525.5 350.0M529.0 353.5L536.0 360.5M539.5 364.0L546.5 371.0M550.0 374.5L557.0 381.5M560.5 385.0L567.5 392.0M571.0 395.5L578.0 402.5M322.5 140.0L326.0 143.5M329.5 147.0L336.5 154.0M340.0 157.5L347.0 164.5M350.5 168.0L357.5 175.0M361.0 178.5L368.0 185.5M371.5 189.0L378.5 196.0M382.0 199.5L389.0 206.5M392.5 210.0L399.5 217.0M403.0 220.5L410.0 227.5M413.5 231.0L420.5 238.0M424.0 241.5L431.0 248.5M434.5 252.0L441.5 259.0M445.0 262.5L452.0 269.5M455.5 273.0L462.5 280.0M466.0 283.5L473.0 290.5M476.5 294.0L483.5 301.0M487.0 304.5L494.0 311.5M497.5 315.0L504.5 322.0M508.0 325.5L515.0 332.5M518.5 336.0L525.5 343.0M529.0 346.5L536.0 353.5M539.5 357.0L546.5 364.0M550.0 367.5L557.0 374.5M560.5 378.0L567.5 385.0M571.0 388.5L578.0 395.5M581.5 399.0L588.5 406.0M329.5 140.0L336.5 147.0M340.0 150.5L347.0 157.5M350.5 161.0L357.5 168.0M361.0 171.5L368.0 178.5M371.5 182.0L378.5 189.0M382.0 192.5L389.0 199.5M392.5 203.0L399.5 210.0M403.0 213.5L410.0 220.5M413.5 224.0L420.5 231.0M424.0 234.5L431.0 241.5M434.5 245.0L441.5 252.0M445.0 255.5L452.0 262.5M455.5 266.0L462.5 273.0M466.0 276.5L473.0 283.5M476.5 287.0L483.5 294.0M487.0 297.5L494.0 304.5M497.5 308.0L504.5 315.0M508.0 318.5L515.0 325.5M518.5 329.0L525.5 336.0M529.0 339.5L536.0 346.5M539.5 350.0L546.5 357.0M550.0 360.5L557.0 367.5M560.5 371.0L567.5 378.0M571.0 381.5L578.0 388.5M581.5 392.0L588.5 399.0M592.0 402.5L595.5 406.0M340.0 143.5L347.0 150.5M350.5 154.0L357.5 161.0M361.0 164.5L368.0 171.5M371.5 175.0L378.5 182.0M382.0 185.5L389.0 192.5M392.5 196.0L399.5 203.0M403.0 206.5L410.0 213.5M413.5 217.0L420.5 224.0M424.0 227.5L431.0 234.5M434.5 238.0L441.5 245.0M445.0 248.5L452.0 255.5M455.5 259.0L462.5 266.0M466.0 269.5L473.0 276.5M476.5 280.0L483.5 287.0M487.0 290.5L494.0 297.5M497.5 301.0L504.5 308.0M508.0 311.5L515.0 318.5M518.5 322.0L525.5 329.0M529.0 332.5L536.0 339.5M539.5 343.0L546.5 350.0M550.0 353.5L557.0 360.5M560.5 364.0L567.5 371.0M571.0 374.5L578.0 381.5M581.5 385.0L588.5 392.0M592.0 395.5L599.0 402.5M343.5 140.0L347.0 143.5M350.5 147.0L357.5 154.0M361.0 157.5L368.0 164.5M371.5 168.0L378.5 175.0M382.0 178.5L389.0 185.5M392.5 189.0L399.5 196.0M403.0 199.5L410.0 206.5M413.5 210.0L420.5 217.0M424.0 220.5L431.0 227.5M434.5 231.0L441.5 238.0M445.0 241.5L452.0 248.5M455.5 252.0L462.5 259.0M466.0 262.5L473.0 269.5M476.5 273.0L483.5 280.0M487.0 283.5L494.0 290.5M497.5 294.0L504.5 301.0M508.0 304.5L515.0 311.5M518.5 315.0L525.5 322.0M529.0 325.5L536.0 332.5M539.5 336.0L546.5 343.0M550.0 346.5L557.0 353.5M560.5 357.0L567.5 364.0M571.0 367.5L578.0 374.5M581.5 378.0L588.5 385.0M592.0 388.5L599.0 395.5M602.5 399.0L609.5 406.0M350.5 140.0L357.5 147.0M361.0 150.5L368.0 157.5M371.5 161.0L378.5 168.0M382.0 171.5L389.0 178.5M392.5 182.0L399.5 189.0M403.0 192.5L410.0 199.5M413.5 203.0L420.5 210.0M424.0 213.5L431.0 220.5M434.5 224.0L441.5 231.0M445.0 234.5L452.0 241.5M455.5 245.0L462.5 252.0M466.0 255.5L473.0 262.5M476.5 266.0L483.5 273.0M487.0 276.5L494.0 283.5M497.5 287.0L504.5 294.0M508.0 297.5L515.0 304.5M518.5 308.0L525.5 315.0M529.0 318.5L536.0 325.5M539.5 329.0L546.5 336.0M550.0 339.5L557.0 346.5M560.5 350.0L567.5 357.0M571.0 360.5L578.0 367.5M581.5 371.0L588.5 378.0M592.0 381.5L599.0 388.5M602.5 392.0L609.5 399.0M613.0 402.5L616.5 406.0M361.0 143.5L368.0 150.5M371.5 154.0L378.5 161.0M382.0 164.5L389.0 171.5M392.5 175.0L399.5 182.0M403.0 185.5L410.0 192.5M413.5 196.0L420.5 203.0M424.0 206.5L431.0 213.5M434.5 217.0L441.5 224.0M445.0 227.5L452.0 234.5M455.5 238.0L462.5 245.0M466.0 248.5L473.0 255.5M476.5 259.0L483.5 266.0M487.0 269.5L494.0 276.5M497.5 280.0L504.5 287.0M508.0 290.5L515.0 297.5M518.5 301.0L525.5 308.0M529.0 311.5L536.0 318.5M539.5 322.0L546.5 329.0M550.0 332.5L557.0 339.5M560.5 343.0L567.5 350.0M571.0 353.5L578.0 360.5M581.5 364.0L588.5 371.0M592.0 374.5L599.0 381.5M602.5 385.0L609.5 392.0M613.0 395.5L620.0 402.5M364.5 140.0L368.0 143.5M371.5 147.0L378.5 154.0M382.0 157.5L389.0 164.5M392.5 168.0L399.5 175.0M403.0 178.5L410.0 185.5M413.5 189.0L420.5 196.0M424.0 199.5L431.0 206.5M434.5 210.0L441.5 217.0M445.0 220.5L452.0 227.5M455.5 231.0L462.5 238.0M466.0 241.5L473.0 248.5M476.5 252.0L483.5 259.0M487.0 262.5L494.0 269.5M497.5 273.0L504.5 280.0M508.0 283.5L515.0 290.5M518.5 294.0L525.5 301.0M529.0 304.5L536.0 311.5M539.5 315.0L546.5 322.0M550.0 325.5L557.0 332.5M560.5 336.0L567.5 343.0M571.0 346.5L578.0 353.5M581.5 357.0L588.5 364.0M592.0 367.5L599.0 374.5M602.5 378.0L609.5 385.0M613.0 388.5L620.0 395.5M623.5 399.0L630.5 406.0M371.5 140.0L378.5 147.0M382.0 150.5L389.0 157.5M392.5 161.0L399.5 168.0M403.0 171.5L410.0 178.5M413.5 182.0L420.5 189.0M424.0 192.5L431.0 199.5M434.5 203.0L441.5 210.0M445.0 213.5L452.0 220.5M455.5 224.0L462.5 231.0M466.0 234.5L473.0 241.5M476.5 245.0L483.5 252.0M487.0 255.5L494.0 262.5M497.5 266.0L504.5 273.0M508.0 276.5L515.0 283.5M518.5 287.0L525.5 294.0M529.0 297.5L536.0 304.5M539.5 308.0L546.5 315.0M550.0 318.5L557.0 325.5M560.5 329.0L567.5 336.0M571.0 339.5L578.0 346.5M581.5 350.0L588.5 357.0M592.0 360.5L599.0 367.5M602.5 371.0L609.5 378.0M613.0 381.5L620.0 388.5M623.5 392.0L630.5 399.0M634.0 402.5L637.5 406.0M382.0 143.5L389.0 150.5M392.5 154.0L399.5 161.0M403.0 164.5L410.0 171.5M413.5 175.0L420.5 182.0M424.0 185.5L431.0 192.5M434.5 196.0L441.5 203.0M445.0 206.5L452.0 213.5M455.5 217.0L462.5 224.0M466.0 227.5L473.0 234.5M476.5 238.0L483.5 245.0M487.0 248.5L494.0 255.5M497.5 259.0L504.5 266.0M508.0 269.5L515.0 276.5M518.5 280.0L525.5 287.0M529.0 290.5L536.0 297.5M539.5 301.0L546.5 308.0M550.0 311.5L557.0 318.5M560.5 322.0L567.5 329.0M571.0 332.5L578.0 339.5M581.5 343.0L588.5 350.0M592.0 353.5L599.0 360.5M602.5 364.0L609.5 371.0M613.0 374.5L620.0 381.5M623.5 385.0L630.5 392.0M634.0 395.5L641.0 402.5M385.5 140.0L389.0 143.5M392.5 147.0L399.5 154.0M403.0 157.5L410.0 164.5M413.5 168.0L420.5 175.0M424.0 178.5L431.0 185.5M434.5 189.0L441.5 196.0M445.0 199.5L452.0 206.5M455.5 210.0L462.5 217.0M466.0 220.5L473.0 227.5M476.5 231.0L483.5 238.0M487.0 241.5L494.0 248.5M497.5 252.0L504.5 259.0M508.0 262.5L515.0 269.5M518.5 273.0L525.5 280.0M529.0 283.5L536.0 290.5M539.5 294.0L546.5 301.0M550.0 304.5L557.0 311.5M560.5 315.0L567.5 322.0M571.0 325.5L578.0 332.5M581.5 336.0L588.5 343.0M592.0 346.5L599.0 353.5M602.5 357.0L609.5 364.0M613.0 367.5L620.0 374.5M623.5 378.0L630.5 385.0M634.0 388.5L641.0 395.5M644.5 399.0L651.5 406.0M392.5 140.0L399.5 147.0M403.0 150.5L410.0 157.5M413.5 161.0L420.5 168.0M424.0 171.5L431.0 178.5M434.5 182.0L441.5 189.0M445.0 192.5L452.0 199.5M455.5 203.0L462.5 210.0M466.0 213.5L473.0 220.5M476.5 224.0L483.5 231.0M487.0 234.5L494.0 241.5M497.5 245.0L504.5 252.0M508.0 255.5L515.0 262.5M518.5 266.0L525.5 273.0M529.0 276.5L536.0 283.5M539.5 287.0L546.5 294.0M550.0 297.5L557.0 304.5M560.5 308.0L567.5 315.0M571.0 318.5L578.0 325.5M581.5 329.0L588.5 336.0M592.0 339.5L599.0 346.5M602.5 350.0L609.5 357.0M613.0 360.5L620.0 367.5M623.5 371.0L630.5 378.0M634.0 381.5L641.0 388.5M644.5 392.0L651.5 399.0M655.0 402.5L658.5 406.0M403.0 143.5L410.0 150.5M413.5 154.0L420.5 161.0M424.0 164.5L431.0 171.5M434.5 175.0L441.5 182.0M445.0 185.5L452.0 192.5M455.5 196.0L462.5 203.0M466.0 206.5L473.0 213.5M476.5 217.0L483.5 224.0M487.0 227.5L494.0 234.5M497.5 238.0L504.5 245.0M508.0 248.5L515.0 255.5M518.5 259.0L525.5 266.0M529.0 269.5L536.0 276.5M539.5 280.0L546.5 287.0M550.0 290.5L557.0 297.5M560.5 301.0L567.5 308.0M571.0 311.5L578.0 318.5M581.5 322.0L588.5 329.0M592.0 332.5L599.0 339.5M602.5 343.0L609.5 350.0M613.0 353.5L620.0 360.5M623.5 364.0L630.5 371.0M634.0 374.5L641.0 381.5M644.5 385.0L651.5 392.0M655.0 395.5L662.0 402.5M406.5 140.0L410.0 143.5M413.5 147.0L420.5 154.0M424.0 157.5L431.0 164.5M434.5 168.0L441.5 175.0M445.0 178.5L452.0 185.5M455.5 189.0L462.5 196.0M466.0 199.5L473.0 206.5M476.5 210.0L483.5 217.0M487.0 220.5L494.0 227.5M497.5 231.0L504.5 238.0M508.0 241.5L515.0 248.5M518.5 252.0L525.5 259.0M529.0 262.5L536.0 269.5M539.5 273.0L546.5 280.0M550.0 283.5L557.0 290.5M560.5 294.0L567.5 301.0M571.0 304.5L578.0 311.5M581.5 315.0L588.5 322.0M592.0 325.5L599.0 332.5M602.5 336.0L609.5 343.0M613.0 346.5L620.0 353.5M623.5 357.0L630.5 364.0M634.0 367.5L641.0 374.5M644.5 378.0L651.5 385.0M655.0 388.5L662.0 395.5M665.5 399.0L672.5 406.0M413.5 140.0L420.5 147.0M424.0 150.5L431.0 157.5M434.5 161.0L441.5 168.0M445.0 171.5L452.0 178.5M455.5 182.0L462.5 189.0M466.0 192.5L473.0 199.5M476.5 203.0L483.5 210.0M487.0 213.5L494.0 220.5M497.5 224.0L504.5 231.0M508.0 234.5L515.0 241.5M518.5 245.0L525.5 252.0M529.0 255.5L536.0 262.5M539.5 266.0L546.5 273.0M550.0 276.5L557.0 283.5M560.5 287.0L567.5 294.0M571.0 297.5L578.0 304.5M581.5 308.0L588.5 315.0M592.0 318.5L599.0 325.5M602.5 329.0L609.5 336.0M613.0 339.5L620.0 346.5M623.5 350.0L630.5 357.0M634.0 360.5L641.0 367.5M644.5 371.0L651.5 378.0M655.0 381.5L662.0 388.5M665.5 392.0L672.5 399.0M676.0 402.5L679.5 406.0M424.0 143.5L431.0 150.5M434.5 154.0L441.5 161.0M445.0 164.5L452.0 171.5M455.5 175.0L462.5 182.0M466.0 185.5L473.0 192.5M476.5 196.0L483.5 203.0M487.0 206.5L494.0 213.5M497.5 217.0L504.5 224.0M508.0 227.5L515.0 234.5M518.5 238.0L525.5 245.0M529.0 248.5L536.0 255.5M539.5 259.0L546.5 266.0M550.0 269.5L557.0 276.5M560.5 280.0L567.5 287.0M571.0 290.5L578.0 297.5M581.5 301.0L588.5 308.0M592.0 311.5L599.0 318.5M602.5 322.0L609.5 329.0M613.0 332.5L620.0 339.5M623.5 343.0L630.5 350.0M634.0 353.5L641.0 360.5M644.5 364.0L651.5 371.0M655.0 374.5L662.0 381.5M665.5 385.0L672.5 392.0M676.0 395.5L683.0 402.5M427.5 140.0L431.0 143.5M434.5 147.0L441.5 154.0M445.0 157.5L452.0 164.5M455.5 168.0L462.5 175.0M466.0 178.5L473.0 185.5M476.5 189.0L483.5 196.0M487.0 199.5L494.0 206.5M497.5 210.0L504.5 217.0M508.0 220.5L515.0 227.5M518.5 231.0L525.5 238.0M529.0 241.5L536.0 248.5M539.5 252.0L546.5 259.0M550.0 262.5L557.0 269.5M560.5 273.0L567.5 280.0M571.0 283.5L578.0 290.5M581.5 294.0L588.5 301.0M592.0 304.5L599.0 311.5M602.5 315.0L609.5 322.0M613.0 325.5L620.0 332.5M623.5 336.0L630.5 343.0M634.0 346.5L641.0 353.5M644.5 357.0L651.5 364.0M655.0 367.5L662.0 374.5M665.5 378.0L672.5 385.0M676.0 388.5L683.0 395.5M686.5 399.0L693.5 406.0M434.5 140.0L441.5 147.0M445.0 150.5L452.0 157.5M455.5 161.0L462.5 168.0M466.0 171.5L473.0 178.5M476.5 182.0L483.5 189.0M487.0 192.5L494.0 199.5M497.5 203.0L504.5 210.0M508.0 213.5L515.0 220.5M518.5 224.0L525.5 231.0M529.0 234.5L536.0 241.5M539.5 245.0L546.5 252.0M550.0 255.5L557.0 262.5M560.5 266.0L567.5 273.0M571.0 276.5L578.0 283.5M581.5 287.0L588.5 294.0M592.0 297.5L599.0 304.5M602.5 308.0L609.5 315.0M613.0 318.5L620.0 325.5M623.5 329.0L630.5 336.0M634.0 339.5L641.0 346.5M644.5 350.0L651.5 357.0M655.0 360.5L662.0 367.5M665.5 371.0L672.5 378.0M676.0 381.5L683.0 388.5M686.5 392.0L693.5 399.0M697.0 402.5L700.5 406.0M445.0 143.5L452.0 150.5M455.5 154.0L462.5 161.0M466.0 164.5L473.0 171.5M476.5 175.0L483.5 182.0M487.0 185.5L494.0 192.5M497.5 196.0L504.5 203.0M508.0 206.5L515.0 213.5M518.5 217.0L525.5 224.0M529.0 227.5L536.0 234.5M539.5 238.0L546.5 245.0M550.0 248.5L557.0 255.5M560.5 259.0L567.5 266.0M571.0 269.5L578.0 276.5M581.5 280.0L588.5 287.0M592.0 290.5L599.0 297.5M602.5 301.0L609.5 308.0M613.0 311.5L620.0 318.5M623.5 322.0L630.5 329.0M634.0 332.5L641.0 339.5M644.5 343.0L651.5 350.0M655.0 353.5L662.0 360.5M665.5 364.0L672.5 371.0M676.0 374.5L683.0 381.5M686.5 385.0L693.5 392.0M697.0 395.5L704.0 402.5M448.5 140.0L452.0 143.5M455.5 147.0L462.5 154.0M466.0 157.5L473.0 164.5M476.5 168.0L483.5 175.0M487.0 178.5L494.0 185.5M497.5 189.0L504.5 196.0M508.0 199.5L515.0 206.5M518.5 210.0L525.5 217.0M529.0 220.5L536.0 227.5M539.5 231.0L546.5 238.0M550.0 241.5L557.0 248.5M560.5 252.0L567.5 259.0M571.0 262.5L578.0 269.5M581.5 273.0L588.5 280.0M592.0 283.5L599.0 290.5M602.5 294.0L609.5 301.0M613.0 304.5L620.0 311.5M623.5 315.0L630.5 322.0M634.0 325.5L641.0 332.5M644.5 336.0L651.5 343.0M655.0 346.5L662.0 353.5M665.5 357.0L672.5 364.0M676.0 367.5L683.0 374.5M686.5 378.0L693.5 385.0M697.0 388.5L704.0 395.5M707.5 399.0L714.5 406.0M455.5 140.0L462.5 147.0M466.0 150.5L473.0 157.5M476.5 161.0L483.5 168.0M487.0 171.5L494.0 178.5M497.5 182.0L504.5 189.0M508.0 192.5L515.0 199.5M518.5 203.0L525.5 210.0M529.0 213.5L536.0 220.5M539.5 224.0L546.5 231.0M550.0 234.5L557.0 241.5M560.5 245.0L567.5 252.0M571.0 255.5L578.0 262.5M581.5 266.0L588.5 273.0M592.0 276.5L599.0 283.5M602.5 287.0L609.5 294.0M613.0 297.5L620.0 304.5M623.5 308.0L630.5 315.0M634.0 318.5L641.0 325.5M644.5 329.0L651.5 336.0M655.0 339.5L662.0 346.5M665.5 350.0L672.5 357.0M676.0 360.5L683.0 367.5M686.5 371.0L693.5 378.0M697.0 381.5L704.0 388.5M707.5 392.0L714.5 399.0M718.0 402.5L721.5 406.0M466.0 143.5L473.0 150.5M476.5 154.0L483.5 161.0M487.0 164.5L494.0 171.5M497.5 175.0L504.5 182.0M508.0 185.5L515.0 192.5M518.5 196.0L525.5 203.0M529.0 206.5L536.0 213.5M539.5 217.0L546.5 224.0M550.0 227.5L557.0 234.5M560.5 238.0L567.5 245.0M571.0 248.5L578.0 255.5M581.5 259.0L588.5 266.0M592.0 269.5L599.0 276.5M602.5 280.0L609.5 287.0M613.0 290.5L620.0 297.5M623.5 301.0L630.5 308.0M634.0 311.5L641.0 318.5M644.5 322.0L651.5 329.0M655.0 332.5L662.0 339.5M665.5 343.0L672.5 350.0M676.0 353.5L683.0 360.5M686.5 364.0L693.5 371.0M697.0 374.5L704.0 381.5M707.5 385.0L714.5 392.0M718.0 395.5L725.0 402.5M469.5 140.0L473.0 143.5M476.5 147.0L483.5 154.0M487.0 157.5L494.0 164.5M497.5 168.0L504.5 175.0M508.0 178.5L515.0 185.5M518.5 189.0L525.5 196.0M529.0 199.5L536.0 206.5M539.5 210.0L546.5 217.0M550.0 220.5L557.0 227.5M560.5 231.0L567.5 238.0M571.0 241.5L578.0 248.5M581.5 252.0L588.5 259.0M592.0 262.5L599.0 269.5M602.5 273.0L609.5 280.0M613.0 283.5L620.0 290.5M623.5 294.0L630.5 301.0M634.0 304.5L641.0 311.5M644.5 315.0L651.5 322.0M655.0 325.5L662.0 332.5M665.5 336.0L672.5 343.0M676.0 346.5L683.0 353.5M686.5 357.0L693.5 364.0M697.0 367.5L704.0 374.5M707.5 378.0L714.5 385.0M718.0 388.5L725.0 395.5M728.5 399.0L735.5 406.0M476.5 140.0L483.5 147.0M487.0 150.5L494.0 157.5M497.5 161.0L504.5 168.0M508.0 171.5L515.0 178.5M518.5 182.0L525.5 189.0M529.0 192.5L536.0 199.5M539.5 203.0L546.5 210.0M550.0 213.5L557.0 220.5M560.5 224.0L567.5 231.0M571.0 234.5L578.0 241.5M581.5 245.0L588.5 252.0M592.0 255.5L599.0 262.5M602.5 266.0L609.5 273.0M613.0 276.5L620.0 283.5M623.5 287.0L630.5 294.0M634.0 297.5L641.0 304.5M644.5 308.0L651.5 315.0M655.0 318.5L662.0 325.5M665.5 329.0L672.5 336.0M676.0 339.5L683.0 346.5M686.5 350.0L693.5 357.0M697.0 360.5L704.0 367.5M707.5 371.0L714.5 378.0M718.0 381.5L725.0 388.5M728.5 392.0L735.5 399.0M739.0 402.5L742.5 406.0M487.0 143.5L494.0 150.5M497.5 154.0L504.5 161.0M508.0 164.5L515.0 171.5M518.5 175.0L525.5 182.0M529.0 185.5L536.0 192.5M539.5 196.0L546.5 203.0M550.0 206.5L557.0 213.5M560.5 217.0L567.5 224.0M571.0 227.5L578.0 234.5M581.5 238.0L588.5 245.0M592.0 248.5L599.0 255.5M602.5 259.0L609.5 266.0M613.0 269.5L620.0 276.5M623.5 280.0L630.5 287.0M634.0 290.5L641.0 297.5M644.5 301.0L651.5 308.0M655.0 311.5L662.0 318.5M665.5 322.0L672.5 329.0M676.0 332.5L683.0 339.5M686.5 343.0L693.5 350.0M697.0 353.5L704.0 360.5M707.5 364.0L714.5 371.0M718.0 374.5L725.0 381.5M728.5 385.0L735.5 392.0M739.0 395.5L746.0 402.5M490.5 140.0L494.0 143.5M497.5 147.0L504.5 154.0M508.0 157.5L515.0 164.5M518.5 168.0L525.5 175.0M529.0 178.5L536.0 185.5M539.5 189.0L546.5 196.0M550.0 199.5L557.0 206.5M560.5 210.0L567.5 217.0M571.0 220.5L578.0 227.5M581.5 231.0L588.5 238.0M592.0 241.5L599.0 248.5M602.5 252.0L609.5 259.0M613.0 262.5L620.0 269.5M623.5 273.0L630.5 280.0M634.0 283.5L641.0 290.5M644.5 294.0L651.5 301.0M655.0 304.5L662.0 311.5M665.5 315.0L672.5 322.0M676.0 325.5L683.0 332.5M686.5 336.0L693.5 343.0M697.0 346.5L704.0 353.5M707.5 357.0L714.5 364.0M718.0 367.5L725.0 374.5M728.5 378.0L735.5 385.0M739.0 388.5L746.0 395.5M749.5 399.0L756.5 406.0M497.5 140.0L504.5 147.0M508.0 150.5L515.0 157.5M518.5 161.0L525.5 168.0M529.0 171.5L536.0 178.5M539.5 182.0L546.5 189.0M550.0 192.5L557.0 199.5M560.5 203.0L567.5 210.0M571.0 213.5L578.0 220.5M581.5 224.0L588.5 231.0M592.0 234.5L599.0 241.5M602.5 245.0L609.5 252.0M613.0 255.5L620.0 262.5M623.5 266.0L630.5 273.0M634.0 276.5L641.0 283.5M644.5 287.0L651.5 294.0M655.0 297.5L662.0 304.5M665.5 308.0L672.5 315.0M676.0 318.5L683.0 325.5M686.5 329.0L693.5 336.0M697.0 339.5L704.0 346.5M707.5 350.0L714.5 357.0M718.0 360.5L725.0 367.5M728.5 371.0L735.5 378.0M739.0 381.5L746.0 388.5M749.5 392.0L756.5 399.0M760.0 402.5L763.5 406.0M508.0 143.5L515.0 150.5M518.5 154.0L525.5 161.0M529.0 164.5L536.0 171.5M539.5 175.0L546.5 182.0M550.0 185.5L557.0 192.5M560.5 196.0L567.5 203.0M571.0 206.5L578.0 213.5M581.5 217.0L588.5 224.0M592.0 227.5L599.0 234.5M602.5 238.0L609.5 245.0M613.0 248.5L620.0 255.5M623.5 259.0L630.5 266.0M634.0 269.5L641.0 276.5M644.5 280.0L651.5 287.0M655.0 290.5L662.0 297.5M665.5 301.0L672.5 308.0M676.0 311.5L683.0 318.5M686.5 322.0L693.5 329.0M697.0 332.5L704.0 339.5M707.5 343.0L714.5 350.0M718.0 353.5L725.0 360.5M728.5 364.0L735.5 371.0M739.0 374.5L746.0 381.5M749.5 385.0L756.5 392.0M760.0 395.5L767.0 402.5M511.5 140.0L515.0 143.5M518.5 147.0L525.5 154.0M529.0 157.5L536.0 164.5M539.5 168.0L546.5 175.0M550.0 178.5L557.0 185.5M560.5 189.0L567.5 196.0M571.0 199.5L578.0 206.5M581.5 210.0L588.5 217.0M592.0 220.5L599.0 227.5M602.5 231.0L609.5 238.0M613.0 241.5L620.0 248.5M623.5 252.0L630.5 259.0M634.0 262.5L641.0 269.5M644.5 273.0L651.5 280.0M655.0 283.5L662.0 290.5M665.5 294.0L672.5 301.0M676.0 304.5L683.0 311.5M686.5 315.0L693.5 322.0M697.0 325.5L704.0 332.5M707.5 336.0L714.5 343.0M718.0 346.5L725.0 353.5M728.5 357.0L735.5 364.0M739.0 367.5L746.0 374.5M749.5 378.0L756.5 385.0M760.0 388.5L767.0 395.5M770.5 399.0L777.5 406.0M518.5 140.0L525.5 147.0M529.0 150.5L536.0 157.5M539.5 161.0L546.5 168.0M550.0 171.5L557.0 178.5M560.5 182.0L567.5 189.0M571.0 192.5L578.0 199.5M581.5 203.0L588.5 210.0M592.0 213.5L599.0 220.5M602.5 224.0L609.5 231.0M613.0 234.5L620.0 241.5M623.5 245.0L630.5 252.0M634.0 255.5L641.0 262.5M644.5 266.0L651.5 273.0M655.0 276.5L662.0 283.5M665.5 287.0L672.5 294.0M676.0 297.5L683.0 304.5M686.5 308.0L693.5 315.0M697.0 318.5L704.0 325.5M707.5 329.0L714.5 336.0M718.0 339.5L725.0 346.5M728.5 350.0L735.5 357.0M739.0 360.5L746.0 367.5M749.5 371.0L756.5 378.0M760.0 381.5L767.0 388.5M770.5 392.0L777.5 399.0M781.0 402.5L784.5 406.0M529.0 143.5L536.0 150.5M539.5 154.0L546.5 161.0M550.0 164.5L557.0 171.5M560.5 175.0L567.5 182.0M571.0 185.5L578.0 192.5M581.5 196.0L588.5 203.0M592.0 206.5L599.0 213.5M602.5 217.0L609.5 224.0M613.0 227.5L620.0 234.5M623.5 238.0L630.5 245.0M634.0 248.5L641.0 255.5M644.5 259.0L651.5 266.0M655.0 269.5L662.0 276.5M665.5 280.0L672.5 287.0M676.0 290.5L683.0 297.5M686.5 301.0L693.5 308.0M697.0 311.5L704.0 318.5M707.5 322.0L714.5 329.0M718.0 332.5L725.0 339.5M728.5 343.0L735.5 350.0M739.0 353.5L746.0 360.5M749.5 364.0L756.5 371.0M760.0 374.5L767.0 381.5M770.5 385.0L777.5 392.0M781.0 395.5L788.0 402.5M532.5 140.0L536.0 143.5M539.5 147.0L546.5 154.0M550.0 157.5L557.0 164.5M560.5 168.0L567.5 175.0M571.0 178.5L578.0 185.5M581.5 189.0L588.5 196.0M592.0 199.5L599.0 206.5M602.5 210.0L609.5 217.0M613.0 220.5L620.0 227.5M623.5 231.0L630.5 238.0M634.0 241.5L641.0 248.5M644.5 252.0L651.5 259.0M655.0 262.5L662.0 269.5M665.5 273.0L672.5 280.0M676.0 283.5L683.0 290.5M686.5 294.0L693.5 301.0M697.0 304.5L704.0 311.5M707.5 315.0L714.5 322.0M718.0 325.5L725.0 332.5M728.5 336.0L735.5 343.0M739.0 346.5L746.0 353.5M749.5 357.0L756.5 364.0M760.0 367.5L767.0 374.5M770.5 378.0L777.5 385.0M781.0 388.5L788.0 395.5M791.5 399.0L798.5 406.0M539.5 140.0L546.5 147.0M550.0 150.5L557.0 157.5M560.5 161.0L567.5 168.0M571.0 171.5L578.0 178.5M581.5 182.0L588.5 189.0M592.0 192.5L599.0 199.5M602.5 203.0L609.5 210.0M613.0 213.5L620.0 220.5M623.5 224.0L630.5 231.0M634.0 234.5L641.0 241.5M644.5 245.0L651.5 252.0M655.0 255.5L662.0 262.5M665.5 266.0L672.5 273.0M676.0 276.5L683.0 283.5M686.5 287.0L693.5 294.0M697.0 297.5L704.0 304.5M707.5 308.0L714.5 315.0M718.0 318.5L725.0 325.5M728.5 329.0L735.5 336.0M739.0 339.5L746.0 346.5M749.5 350.0L756.5 357.0M760.0 360.5L767.0 367.5M770.5 371.0L777.5 378.0M781.0 381.5L788.0 388.5M791.5 392.0L798.5 399.0M802.0 402.5L805.5 406.0M550.0 143.5L557.0 150.5M560.5 154.0L567.5 161.0M571.0 164.5L578.0 171.5M581.5 175.0L588.5 182.0M592.0 185.5L599.0 192.5M602.5 196.0L609.5 203.0M613.0 206.5L620.0 213.5M623.5 217.0L630.5 224.0M634.0 227.5L641.0 234.5M644.5 238.0L651.5 245.0M655.0 248.5L662.0 255.5M665.5 259.0L672.5 266.0M676.0 269.5L683.0 276.5M686.5 280.0L693.5 287.0M697.0 290.5L704.0 297.5M707.5 301.0L714.5 308.0M718.0 311.5L725.0 318.5M728.5 322.0L735.5 329.0M739.0 332.5L746.0 339.5M749.5 343.0L756.5 350.0M760.0 353.5L767.0 360.5M770.5 364.0L777.5 371.0M781.0 374.5L788.0 381.5M791.5 385.0L798.5 392.0M802.0 395.5L809.0 402.5M553.5 140.0L557.0 143.5M560.5 147.0L567.5 154.0M571.0 157.5L578.0 164.5M581.5 168.0L588.5 175.0M592.0 178.5L599.0 185.5M602.5 189.0L609.5 196.0M613.0 199.5L620.0 206.5M623.5 210.0L630.5 217.0M634.0 220.5L641.0 227.5M644.5 231.0L651.5 238.0M655.0 241.5L662.0 248.5M665.5 252.0L672.5 259.0M676.0 262.5L683.0 269.5M686.5 273.0L693.5 280.0M697.0 283.5L704.0 290.5M707.5 294.0L714.5 301.0M718.0 304.5L725.0 311.5M728.5 315.0L735.5 322.0M739.0 325.5L746.0 332.5M749.5 336.0L756.5 343.0M760.0 346.5L767.0 353.5M770.5 357.0L777.5 364.0M781.0 367.5L788.0 374.5M791.5 378.0L798.5 385.0M802.0 388.5L809.0 395.5M812.5 399.0L819.5 406.0M560.5 140.0L567.5 147.0M571.0 150.5L578.0 157.5M581.5 161.0L588.5 168.0M592.0 171.5L599.0 178.5M602.5 182.0L609.5 189.0M613.0 192.5L620.0 199.5M623.5 203.0L630.5 210.0M634.0 213.5L641.0 220.5M644.5 224.0L651.5 231.0M655.0 234.5L662.0 241.5M665.5 245.0L672.5 252.0M676.0 255.5L683.0 262.5M686.5 266.0L693.5 273.0M697.0 276.5L704.0 283.5M707.5 287.0L714.5 294.0M718.0 297.5L725.0 304.5M728.5 308.0L735.5 315.0M739.0 318.5L746.0 325.5M749.5 329.0L756.5 336.0M760.0 339.5L767.0 346.5M770.5 350.0L777.5 357.0M781.0 360.5L788.0 367.5M791.5 371.0L798.5 378.0M802.0 381.5L809.0 388.5M812.5 392.0L819.5 399.0M823.0 402.5L826.5 406.0M571.0 143.5L578.0 150.5M581.5 154.0L588.5 161.0M592.0 164.5L599.0 171.5M602.5 175.0L609.5 182.0M613.0 185.5L620.0 192.5M623.5 196.0L630.5 203.0M634.0 206.5L641.0 213.5M644.5 217.0L651.5 224.0M655.0 227.5L662.0 234.5M665.5 238.0L672.5 245.0M676.0 248.5L683.0 255.5M686.5 259.0L693.5 266.0M697.0 269.5L704.0 276.5M707.5 280.0L714.5 287.0M718.0 290.5L725.0 297.5M728.5 301.0L735.5 308.0M739.0 311.5L746.0 318.5M749.5 322.0L756.5 329.0M760.0 332.5L767.0 339.5M770.5 343.0L777.5 350.0M781.0 353.5L788.0 360.5M791.5 364.0L798.5 371.0M802.0 374.5L809.0 381.5M812.5 385.0L819.5 392.0M823.0 395.5L830.0 402.5M574.5 140.0L578.0 143.5M581.5 147.0L588.5 154.0M592.0 157.5L599.0 164.5M602.5 168.0L609.5 175.0M613.0 178.5L620.0 185.5M623.5 189.0L630.5 196.0M634.0 199.5L641.0 206.5M644.5 210.0L651.5 217.0M655.0 220.5L662.0 227.5M665.5 231.0L672.5 238.0M676.0 241.5L683.0 248.5M686.5 252.0L693.5 259.0M697.0 262.5L704.0 269.5M707.5 273.0L714.5 280.0M718.0 283.5L725.0 290.5M728.5 294.0L735.5 301.0M739.0 304.5L746.0 311.5M749.5 315.0L756.5 322.0M760.0 325.5L767.0 332.5M770.5 336.0L777.5 343.0M781.0 346.5L788.0 353.5M791.5 357.0L798.5 364.0M802.0 367.5L809.0 374.5M812.5 378.0L819.5 385.0M823.0 388.5L830.0 395.5M833.5 399.0L840.5 406.0M581.5 140.0L588.5 147.0M592.0 150.5L599.0 157.5M602.5 161.0L609.5 168.0M613.0 171.5L620.0 178.5M623.5 182.0L630.5 189.0M634.0 192.5L641.0 199.5M644.5 203.0L651.5 210.0M655.0 213.5L662.0 220.5M665.5 224.0L672.5 231.0M676.0 234.5L683.0 241.5M686.5 245.0L693.5 252.0M697.0 255.5L704.0 262.5M707.5 266.0L714.5 273.0M718.0 276.5L725.0 283.5M728.5 287.0L735.5 294.0M739.0 297.5L746.0 304.5M749.5 308.0L756.5 315.0M760.0 318.5L767.0 325.5M770.5 329.0L777.5 336.0M781.0 339.5L788.0 346.5M791.5 350.0L798.5 357.0M802.0 360.5L809.0 367.5M812.5 371.0L819.5 378.0M823.0 381.5L830.0 388.5M833.5 392.0L840.5 399.0M844.0 402.5L847.5 406.0M592.0 143.5L599.0 150.5M602.5 154.0L609.5 161.0M613.0 164.5L620.0 171.5M623.5 175.0L630.5 182.0M634.0 185.5L641.0 192.5M644.5 196.0L651.5 203.0M655.0 206.5L662.0 213.5M665.5 217.0L672.5 224.0M676.0 227.5L683.0 234.5M686.5 238.0L693.5 245.0M697.0 248.5L704.0 255.5M707.5 259.0L714.5 266.0M718.0 269.5L725.0 276.5M728.5 280.0L735.5 287.0M739.0 290.5L746.0 297.5M749.5 301.0L756.5 308.0M760.0 311.5L767.0 318.5M770.5 322.0L777.5 329.0M781.0 332.5L788.0 339.5M791.5 343.0L798.5 350.0M802.0 353.5L809.0 360.5M812.5 364.0L819.5 371.0M823.0 374.5L830.0 381.5M833.5 385.0L840.5 392.0M844.0 395.5L851.0 402.5M595.5 140.0L599.0 143.5M602.5 147.0L609.5 154.0M613.0 157.5L620.0 164.5M623.5 168.0L630.5 175.0M634.0 178.5L641.0 185.5M644.5 189.0L651.5 196.0M655.0 199.5L662.0 206.5M665.5 210.0L672.5 217.0M676.0 220.5L683.0 227.5M686.5 231.0L693.5 238.0M697.0 241.5L704.0 248.5M707.5 252.0L714.5 259.0M718.0 262.5L725.0 269.5M728.5 273.0L735.5 280.0M739.0 283.5L746.0 290.5M749.5 294.0L756.5 301.0M760.0 304.5L767.0 311.5M770.5 315.0L777.5 322.0M781.0 325.5L788.0 332.5M791.5 336.0L798.5 343.0M802.0 346.5L809.0 353.5M812.5 357.0L819.5 364.0M823.0 367.5L830.0 374.5M833.5 378.0L840.5 385.0M844.0 388.5L851.0 395.5M854.5 399.0L861.5 406.0M602.5 140.0L609.5 147.0M613.0 150.5L620.0 157.5M623.5 161.0L630.5 168.0M634.0 171.5L641.0 178.5M644.5 182.0L651.5 189.0M655.0 192.5L662.0 199.5M665.5 203.0L672.5 210.0M676.0 213.5L683.0 220.5M686.5 224.0L693.5 231.0M697.0 234.5L704.0 241.5M707.5 245.0L714.5 252.0M718.0 255.5L725.0 262.5M728.5 266.0L735.5 273.0M739.0 276.5L746.0 283.5M749.5 287.0L756.5 294.0M760.0 297.5L767.0 304.5M770.5 308.0L777.5 315.0M781.0 318.5L788.0 325.5M791.5 329.0L798.5 336.0M802.0 339.5L809.0 346.5M812.5 350.0L819.5 357.0M823.0 360.5L830.0 367.5M833.5 371.0L840.5 378.0M844.0 381.5L851.0 388.5M854.5 392.0L861.5 399.0M865.0 402.5L868.5 406.0"/></g>
 <path d="M265 192.5 L289.5 267 L350.5 188.5 L375.3 266.4" fill="none" stroke="#d8d8d8" stroke-width="1"/>
 
 <path d="M445.5 262 L488.5 169.5 L539 257.5" fill="none" stroke="#d8d8d8" stroke-width="1"/>
 <rect x="277.5" y="301.5" width="119" height="90" fill="none" stroke="#d8d8d8" stroke-width="1"/>
 
 <path d="M426 300.5 A75 75 0 1 0 570 300.5" fill="none" stroke="#d8d8d8" stroke-width="1"/>
</svg>
<!-- toast -->
<div class="a" style="left:426px;top:142px;width:72px;height:71px;background:rgba(72,72,72,0.82);border-radius:3px"></div>
<svg class="a" style="left:446px;top:151px" width="33" height="27" viewBox="0 0 33 27"><path d="M2.5 13.5 L11.5 22.5 L30.5 3" fill="none" stroke="#fff" stroke-width="3.8"/></svg>
<div class="t" style="left:446px;top:186px;color:#e0e0e0;font-size:11px;letter-spacing:-0.2px">已保存</div>
<div class="a" id="leftb"></div>
<div class="a" id="leftk"></div>
</body></html>
